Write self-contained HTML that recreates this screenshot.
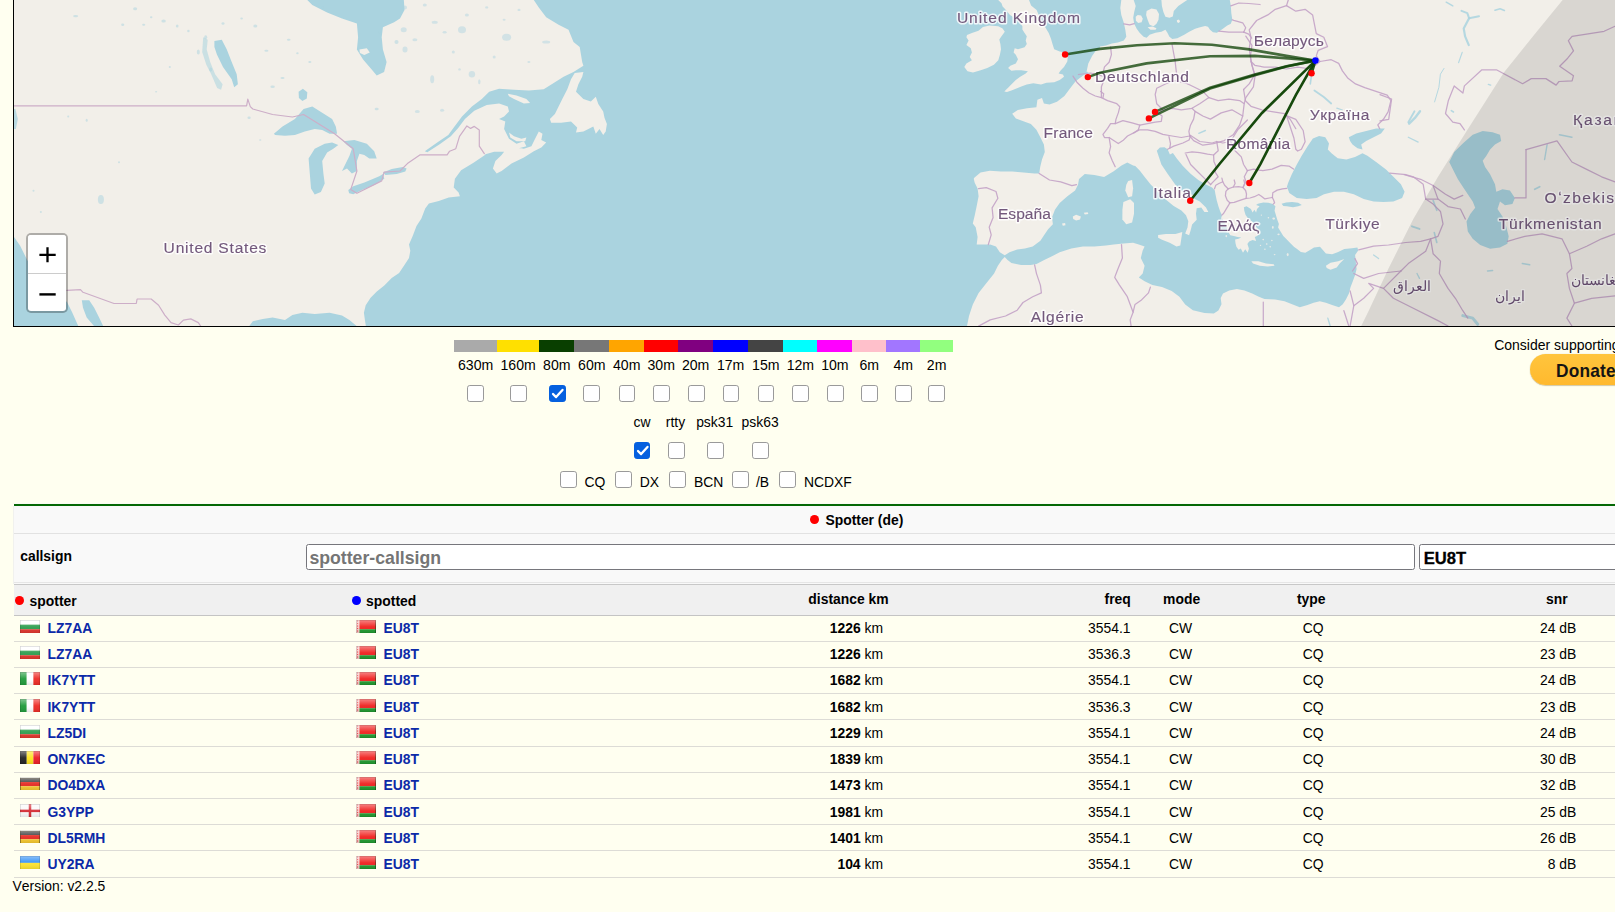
<!DOCTYPE html>
<html>
<head>
<meta charset="utf-8">
<title>RBN map</title>
<style>
*{box-sizing:border-box;}
html,body{margin:0;padding:0;overflow:hidden;}
body{width:1615px;height:912px;overflow:hidden;background:#fffff0;font-family:"Liberation Sans",sans-serif;font-size:13.75px;color:#000;position:relative;font-kerning:none;}
.abs{position:absolute;}
#map{position:absolute;left:13px;top:0;width:1602px;height:327px;border-left:1px solid #000;border-bottom:1px solid #000;overflow:hidden;background:#aad3df;}
#map svg{position:absolute;left:-14px;top:0;}
.zoomctl{position:absolute;left:26.4px;top:233px;width:41.6px;height:79.6px;border:2px solid rgba(0,0,0,0.28);border-radius:5px;background:#fff;background-clip:padding-box;}
.zoomctl .b{position:absolute;left:0;width:37.6px;height:37px;background:#fff;text-align:center;font-weight:bold;font-size:26px;line-height:37px;color:#000;}
.bandbar div{position:absolute;top:340px;height:12px;}
.bl{position:absolute;top:357px;font-size:14.5px;line-height:17px;text-align:center;white-space:nowrap;}
.cb{position:absolute;width:16.8px;height:16.8px;border:1.1px solid #9a9a9a;border-radius:2.8px;background:#fff;}
.cb.on{background:#0560df;border-color:#0560df;}
.t{position:absolute;white-space:nowrap;line-height:16px;}
.b{font-weight:bold;}
.hl{position:absolute;left:14px;width:1601px;height:1px;}
a.cs{color:#0c2aa8;font-weight:bold;text-decoration:none;}
</style>
</head>
<body>

<div id="map">
<svg width="1615" height="327" viewBox="0 0 1615 327">
<defs><filter id="tb" x="-2%" y="-5%" width="104%" height="110%"><feGaussianBlur stdDeviation="0.45"/></filter></defs>
<g filter="url(#tb)">
<rect x="-10" y="-10" width="1640" height="350" fill="#aad3df"/>
<path d="M10.0 -5.0 L533.8 -5.0 L533.8 0.0 L538.8 7.4 L546.2 17.3 L558.6 24.8 L568.5 29.7 L573.5 42.1 L579.7 47.1 L582.2 62.0 L583.4 65.7 L573.5 71.9 L563.6 76.8 L553.7 83.0 L543.7 89.2 L528.9 90.5 L514.0 89.7 L499.1 88.7 L489.2 91.7 L481.8 99.1 L471.9 106.6 L462.0 116.5 L454.5 126.4 L448.3 135.1 L437.2 142.5 L424.8 151.2 L427.3 152.2 L439.7 144.2 L450.8 136.3 L458.2 128.1 L464.9 119.0 L474.3 110.8 L486.7 105.1 L499.1 103.6 L507.8 106.6 L509.0 111.5 L504.1 116.5 L499.1 119.0 L505.3 121.4 L504.1 128.9 L509.0 138.8 L516.5 143.7 L523.9 141.3 L526.4 146.2 L519.0 148.2 L512.8 146.7 L523.9 148.7 L531.4 146.2 L535.1 138.8 L538.8 131.4 L542.5 133.8 L541.3 140.0 L546.2 142.5 L541.3 147.5 L533.8 151.2 L523.9 157.4 L511.5 163.6 L501.6 171.0 L496.7 173.5 L492.9 168.5 L495.4 161.1 L501.6 154.9 L504.1 151.7 L494.2 151.7 L485.5 154.2 L484.6 155.3 L473.5 162.7 L461.1 170.2 L454.9 178.8 L453.7 187.5 L458.6 192.5 L459.9 196.2 L448.7 197.4 L438.8 201.1 L428.9 203.6 L425.2 208.6 L421.4 218.5 L416.5 225.9 L412.8 235.8 L409.0 244.5 L410.3 250.7 L409.0 258.1 L404.1 265.6 L399.1 273.0 L391.7 278.0 L384.3 285.4 L376.8 291.6 L370.6 297.8 L365.7 305.2 L363.9 312.7 L364.9 320.1 L366.9 332.5 L356.9 332.5 L356.9 326.3 L349.4 320.1 L342.0 315.6 L329.6 312.7 L314.7 313.9 L302.4 312.7 L292.4 315.1 L285.0 320.1 L272.6 317.6 L262.7 318.9 L252.8 321.3 L247.8 328.0 L247.8 332.5 L10.0 332.0Z" fill="#f2efe9" />
<path d="M1121.3 -4.0 L1121.3 0.0 L1120.3 7.9 L1121.3 14.9 L1123.8 22.8 L1125.3 29.7 L1126.3 36.7 L1123.8 40.6 L1117.8 42.6 L1111.9 43.6 L1105.9 45.6 L1100.0 46.6 L1099.5 48.9 L1095.4 51.3 L1092.1 55.9 L1088.3 63.4 L1086.5 71.8 L1088.7 71.9 L1083.1 75.6 L1075.6 81.2 L1070.0 88.6 L1064.4 96.1 L1057.0 101.7 L1049.5 104.5 L1043.9 103.6 L1042.0 98.0 L1037.4 99.8 L1036.4 107.3 L1027.1 108.2 L1017.8 110.1 L1012.2 113.8 L1015.9 118.5 L1023.4 121.3 L1030.9 124.1 L1036.4 129.7 L1040.2 137.1 L1043.9 144.6 L1044.8 152.0 L1042.0 159.5 L1040.2 167.0 L1039.2 173.5 L1034.6 173.5 L1023.4 172.6 L1012.2 171.6 L1001.0 171.6 L989.8 170.7 L980.5 172.6 L974.0 178.1 L973.8 179.0 L974.7 182.8 L977.6 188.6 L978.6 196.3 L976.7 206.0 L974.7 215.6 L972.8 223.4 L975.7 227.2 L977.6 236.9 L976.7 244.6 L982.5 244.6 L990.2 244.6 L996.0 246.5 L999.8 252.3 L1004.7 255.2 L1009.5 252.3 L1017.2 249.4 L1024.9 248.5 L1032.7 246.5 L1040.4 240.7 L1044.2 234.9 L1048.1 229.2 L1052.9 224.3 L1052.0 217.6 L1054.9 209.8 L1059.7 203.1 L1067.4 196.3 L1075.1 190.5 L1078.0 184.7 L1079.0 179.0 L1084.8 174.1 L1094.4 175.1 L1104.1 177.0 L1113.7 171.2 L1121.5 165.4 L1127.3 162.5 L1133.1 165.4 L1135.3 166.1 L1139.9 170.7 L1144.5 176.8 L1150.7 184.5 L1158.3 192.2 L1166.0 199.8 L1173.7 206.0 L1181.4 210.6 L1186.0 215.2 L1188.3 221.3 L1187.5 227.5 L1185.2 233.6 L1189.1 235.2 L1190.6 230.6 L1192.1 224.4 L1196.7 219.8 L1196.0 213.7 L1196.7 208.3 L1201.3 207.5 L1204.4 212.1 L1208.3 212.1 L1206.0 207.5 L1199.8 201.4 L1192.1 197.5 L1194.0 195.2 L1190.6 194.2 L1182.9 192.2 L1175.2 184.5 L1167.6 173.7 L1161.4 164.5 L1156.8 150.7 L1159.9 147.6 L1164.5 147.3 L1167.6 149.2 L1169.9 154.5 L1172.9 153.0 L1176.8 158.4 L1182.9 166.1 L1190.6 173.7 L1198.3 179.9 L1206.0 184.5 L1212.1 187.6 L1216.7 192.2 L1214.5 188.8 L1215.4 194.0 L1216.7 200.2 L1218.4 206.3 L1220.2 211.6 L1221.9 215.1 L1221.5 217.7 L1224.1 221.2 L1226.3 226.5 L1228.1 231.8 L1230.3 235.3 L1233.8 236.1 L1237.7 237.0 L1241.2 237.5 L1238.6 238.8 L1235.1 239.6 L1235.5 243.2 L1236.4 246.7 L1238.6 249.7 L1240.8 248.4 L1243.0 252.8 L1245.2 249.3 L1247.8 252.8 L1248.9 248.4 L1247.4 244.0 L1249.1 241.4 L1252.6 240.1 L1256.1 241.0 L1254.8 237.0 L1257.0 236.1 L1260.5 233.5 L1257.9 229.1 L1254.4 224.7 L1251.8 221.2 L1248.2 218.6 L1245.6 215.1 L1244.3 210.7 L1243.9 207.2 L1246.5 206.3 L1250.9 208.9 L1252.6 212.5 L1254.4 209.8 L1256.1 212.5 L1257.0 208.9 L1259.6 206.3 L1256.1 205.0 L1257.9 203.7 L1263.2 202.4 L1268.4 202.8 L1272.8 204.1 L1275.4 206.3 L1274.6 210.7 L1275.9 215.1 L1277.2 219.5 L1278.9 223.9 L1278.1 227.4 L1280.7 231.8 L1283.3 236.1 L1286.8 239.6 L1290.4 243.2 L1293.9 246.7 L1297.4 249.3 L1300.9 251.9 L1305.3 252.8 L1309.6 250.2 L1314.0 247.5 L1320.0 246.7 L1325.9 253.6 L1332.1 254.3 L1338.2 252.0 L1344.3 249.0 L1352.0 248.2 L1357.4 247.4 L1358.2 250.5 L1355.1 255.1 L1355.9 262.8 L1356.6 268.9 L1355.1 275.1 L1352.8 281.2 L1350.5 287.3 L1348.9 293.5 L1345.9 299.6 L1342.8 304.2 L1339.0 307.3 L1332.1 305.0 L1325.9 302.7 L1319.8 301.2 L1313.6 302.7 L1307.5 305.0 L1299.8 307.3 L1292.1 304.2 L1284.5 301.2 L1275.2 299.6 L1264.5 298.9 L1258.3 296.6 L1252.2 293.5 L1244.5 290.4 L1236.9 288.9 L1229.2 290.4 L1223.0 293.5 L1220.7 298.1 L1221.5 304.2 L1218.4 310.4 L1213.8 313.4 L1204.5 313.1 L1192.9 310.2 L1185.2 304.4 L1179.4 296.7 L1171.7 290.9 L1162.0 287.1 L1152.4 285.1 L1144.6 281.3 L1138.8 277.4 L1142.7 273.6 L1144.6 265.8 L1140.8 258.1 L1142.7 250.4 L1144.6 246.5 L1138.8 244.6 L1133.1 242.7 L1123.4 243.6 L1113.7 244.6 L1106.0 245.6 L1094.4 246.5 L1082.9 246.5 L1071.3 248.5 L1059.7 252.3 L1052.0 256.2 L1044.2 260.0 L1036.5 263.9 L1030.7 264.9 L1021.1 264.9 L1011.4 262.9 L1007.6 260.0 L1004.7 257.1 L1001.8 260.0 L997.9 265.8 L994.1 273.6 L986.3 283.2 L978.6 292.9 L972.8 304.4 L969.0 316.0 L967.0 326.1 L967.0 331.5 L1625.0 332.0 L1625.0 -5.0 L1229.8 -4.0 L1229.8 0.0 L1230.8 5.9 L1231.3 12.9 L1232.3 19.8 L1230.8 23.8 L1226.9 25.8 L1222.9 28.7 L1219.9 30.7 L1216.9 32.7 L1213.0 32.2 L1210.0 29.7 L1208.0 26.8 L1205.1 26.0 L1200.1 27.3 L1195.1 28.7 L1189.2 31.7 L1184.2 34.7 L1177.3 38.2 L1172.3 39.1 L1169.4 36.7 L1167.4 32.7 L1165.4 29.7 L1161.4 31.7 L1155.5 32.7 L1149.6 34.7 L1146.6 37.7 L1143.6 36.7 L1139.6 32.7 L1136.7 28.7 L1134.2 23.8 L1133.2 17.8 L1134.2 11.9 L1135.7 5.9 L1133.7 0.0 L1133.7 -4.0Z" fill="#f2efe9" />
<path d="M583.4 71.9 L582.2 76.8 L578.4 84.3 L576.0 91.7 L583.4 99.1 L590.8 101.6 L595.8 96.7 L598.3 104.1 L603.2 111.5 L604.5 117.7 L606.9 123.9 L605.7 131.4 L603.2 135.1 L599.5 128.9 L595.8 133.8 L593.3 126.4 L588.4 128.9 L583.4 131.4 L576.0 132.6 L577.2 127.6 L571.0 121.4 L561.1 122.7 L551.2 122.7 L549.9 119.0 L554.9 114.0 L558.6 106.6 L562.3 99.1 L567.3 89.2 L571.0 79.3 L574.7 73.1Z" fill="#f2efe9" />
<path d="M507.8 93.7 L516.5 95.4 L526.4 99.1 L530.1 102.9 L523.9 103.6 L514.0 99.1 L509.0 96.2Z" fill="#f2efe9" />
<path d="M509.0 132.6 L514.0 136.3 L521.4 138.8 L526.4 137.5 L525.2 141.3 L516.5 141.3 L510.3 137.5Z" fill="#f2efe9" />
<path d="M982.9 26.9 L989.5 25.4 L998.3 26.3 L1002.6 28.5 L1004.8 31.8 L1001.5 36.2 L999.3 39.5 L1000.4 43.9 L1001.0 49.3 L999.9 54.8 L998.3 60.3 L993.9 64.7 L987.3 68.0 L980.7 70.2 L973.0 72.4 L967.5 71.3 L964.3 66.9 L966.4 63.6 L971.9 60.3 L969.7 57.0 L971.9 52.6 L970.8 48.3 L966.4 45.0 L968.6 40.6 L966.4 37.3 L967.0 35.1 L971.9 32.9 L978.5 30.7Z" fill="#f2efe9" />
<path d="M998.2 -5.0 L998.2 0.0 L1001.5 3.3 L1002.6 6.6 L1004.8 8.8 L1010.0 15.0 L1018.0 20.0 L1022.4 26.3 L1022.4 29.6 L1024.6 32.9 L1026.8 36.2 L1025.7 40.6 L1026.8 43.9 L1024.6 47.2 L1018.0 49.3 L1014.7 48.2 L1013.6 52.6 L1015.8 54.8 L1018.0 59.2 L1015.8 63.6 L1010.3 65.8 L1008.1 68.0 L1011.4 70.7 L1015.8 70.2 L1021.3 70.2 L1027.9 71.3 L1025.7 73.5 L1020.2 76.8 L1015.8 80.0 L1012.5 83.3 L1008.1 87.7 L1004.3 91.6 L1007.0 92.1 L1011.4 90.5 L1015.8 88.8 L1021.3 86.6 L1026.8 84.4 L1033.3 83.3 L1041.0 84.4 L1046.5 82.8 L1054.2 82.2 L1059.7 80.0 L1064.0 76.8 L1063.0 74.6 L1058.6 73.5 L1060.8 70.2 L1064.0 66.9 L1067.3 61.4 L1067.9 55.9 L1065.1 52.6 L1059.7 51.5 L1054.2 49.3 L1052.5 43.9 L1050.9 38.4 L1048.7 32.9 L1045.4 27.4 L1040.0 18.0 L1036.6 9.9 L1031.1 5.5 L1029.0 0.0 L1029.0 -5.0Z" fill="#f2efe9" />
<path d="M1128.2 180.9 L1132.1 179.9 L1133.1 188.6 L1132.1 196.3 L1128.2 197.3 L1125.3 190.5 L1126.3 184.7Z" fill="#f2efe9" />
<path d="M1123.4 202.1 L1130.2 199.2 L1134.0 203.1 L1134.0 213.7 L1132.1 222.4 L1126.3 224.3 L1122.4 219.5 L1122.4 209.8Z" fill="#f2efe9" />
<path d="M1158.1 234.9 L1165.9 234.0 L1175.5 234.0 L1182.3 232.0 L1181.3 238.8 L1180.3 245.6 L1176.5 246.5 L1169.7 242.7 L1162.0 239.8 L1158.1 237.8Z" fill="#f2efe9" />
<path d="M1072.8 216.6 L1076.1 214.7 L1080.9 216.6 L1080.0 219.5 L1076.1 220.5 L1073.2 219.1Z" fill="#f2efe9" />
<path d="M1083.8 212.7 L1087.7 212.2 L1088.3 214.1 L1084.8 214.5Z" fill="#f2efe9" />
<path d="M1062.0 223.4 L1065.1 223.0 L1065.5 225.3 L1062.8 225.7Z" fill="#f2efe9" />
<path d="M1251.4 261.2 L1258.3 261.2 L1266.0 263.5 L1273.7 264.3 L1274.5 265.8 L1267.6 266.6 L1259.9 265.8 L1253.0 263.5Z" fill="#f2efe9" />
<path d="M1325.9 265.8 L1330.5 262.8 L1338.2 261.2 L1344.3 258.9 L1339.7 263.5 L1336.7 267.4 L1330.5 269.7 L1326.7 268.1Z" fill="#f2efe9" />
<path d="M1161.4 -4.0 L1161.4 0.0 L1161.9 5.9 L1163.4 11.9 L1165.4 16.8 L1169.4 17.8 L1172.8 16.4 L1173.8 10.9 L1178.3 5.9 L1184.2 2.0 L1187.2 0.0 L1187.2 -4.0Z" fill="#f2efe9" />
<path d="M1146.6 10.9 L1151.5 8.4 L1156.5 9.4 L1159.0 13.9 L1158.5 19.8 L1156.5 23.8 L1153.5 26.3 L1149.6 24.8 L1147.6 19.8 L1146.1 14.9Z" fill="#f2efe9" />
<path d="M1135.7 16.8 L1137.7 14.9 L1141.1 15.4 L1142.8 18.8 L1141.6 22.3 L1138.2 23.0 L1135.9 20.8Z" fill="#f2efe9" />
<path d="M1147.6 27.3 L1152.5 26.6 L1156.5 28.2 L1155.5 29.7 L1150.5 29.7Z" fill="#f2efe9" />
<path d="M1176.8 20.3 L1178.8 19.6 L1180.1 21.3 L1178.8 23.0 L1177.1 22.3Z" fill="#f2efe9" />
<ellipse cx="1273.7" cy="218.6" rx="1.4" ry="1.1" fill="#f2efe9" opacity="0.85"/>
<ellipse cx="1272.8" cy="227.4" rx="0.9" ry="1.3" fill="#f2efe9" opacity="0.85"/>
<ellipse cx="1278.5" cy="234.4" rx="1.2" ry="0.8" fill="#f2efe9" opacity="0.85"/>
<ellipse cx="1287.7" cy="254.6" rx="1.0" ry="1.6" fill="#f2efe9" opacity="0.85"/>
<ellipse cx="1263.2" cy="239.6" rx="0.8" ry="0.8" fill="#f2efe9" opacity="0.85"/>
<ellipse cx="1266.7" cy="244.0" rx="0.9" ry="0.7" fill="#f2efe9" opacity="0.85"/>
<ellipse cx="1264.9" cy="249.3" rx="0.8" ry="0.8" fill="#f2efe9" opacity="0.85"/>
<ellipse cx="1270.2" cy="246.7" rx="0.8" ry="0.8" fill="#f2efe9" opacity="0.85"/>
<ellipse cx="1260.5" cy="245.4" rx="0.7" ry="0.7" fill="#f2efe9" opacity="0.85"/>
<ellipse cx="1271.9" cy="240.5" rx="0.7" ry="0.7" fill="#f2efe9" opacity="0.85"/>
<ellipse cx="1268.4" cy="217.7" rx="0.8" ry="0.8" fill="#f2efe9" opacity="0.85"/>
<ellipse cx="1261.4" cy="215.1" rx="0.7" ry="0.7" fill="#f2efe9" opacity="0.85"/>
<ellipse cx="1274.6" cy="254.6" rx="0.9" ry="0.6" fill="#f2efe9" opacity="0.85"/>
<ellipse cx="1257.5" cy="232.6" rx="1.0" ry="2.4" fill="#f2efe9" opacity="0.85"/>
<ellipse cx="1221.9" cy="218.6" rx="0.7" ry="1.5" fill="#f2efe9" opacity="0.85"/>
<ellipse cx="1226.3" cy="236.1" rx="0.8" ry="1.2" fill="#f2efe9" opacity="0.85"/>
<path d="M307.3 -5.0 L307.3 0.0 L312.3 5.0 L327.1 12.4 L342.0 18.6 L356.9 23.5 L358.1 37.2 L356.9 49.6 L363.1 59.5 L371.7 69.4 L376.7 75.6 L384.1 71.9 L386.6 62.0 L382.9 49.6 L381.7 37.2 L382.9 27.3 L394.1 22.3 L400.0 18.6 L404.5 9.9 L403.5 -5.0Z" fill="#aad3df" />
<path d="M359.4 49.6 L366.8 48.3 L369.8 52.5 L364.3 55.0 L359.9 53.0Z" fill="#f2efe9" />
<path d="M273.9 133.8 L282.5 126.4 L294.9 119.0 L303.6 109.0 L312.3 106.6 L322.2 112.8 L332.1 119.0 L335.8 126.4 L337.1 133.8 L329.6 133.8 L322.2 130.1 L314.7 128.9 L304.8 131.4 L294.9 135.1 L285.0 135.8 L275.1 135.1Z" fill="#aad3df" />
<path d="M308.6 158.6 L314.7 148.7 L324.7 143.7 L332.1 142.5 L338.3 145.0 L333.3 148.7 L327.1 152.4 L322.2 161.1 L323.4 173.5 L324.7 183.4 L320.9 192.1 L314.7 194.5 L311.0 188.4 L309.8 173.5Z" fill="#aad3df" />
<path d="M343.2 141.3 L354.4 140.0 L366.8 143.7 L374.2 151.2 L376.7 158.6 L369.3 158.6 L364.3 154.9 L359.4 153.7 L356.9 161.1 L356.9 171.0 L351.9 173.5 L347.0 168.5 L342.0 171.0 L345.7 163.6 L349.4 156.1 L351.9 148.7 L347.0 145.0Z" fill="#aad3df" />
<path d="M348.3 190.0 L353.3 186.3 L364.4 182.5 L379.3 176.3 L383.0 173.9 L384.3 178.8 L374.3 185.0 L362.0 190.0 L353.3 194.2 L349.1 193.2Z" fill="#aad3df" />
<path d="M383.0 172.6 L391.7 168.9 L402.9 166.9 L406.6 168.4 L405.3 171.4 L396.7 173.9 L385.5 175.1Z" fill="#aad3df" />
<path d="M298.6 91.7 L302.9 88.7 L307.3 92.2 L306.8 98.6 L302.4 101.1 L298.9 97.9Z" fill="#aad3df" />
<path d="M214.4 40.9 L221.8 39.7 L226.8 49.6 L231.7 62.0 L236.7 74.3 L237.9 84.3 L234.2 87.2 L231.7 79.3 L223.0 66.9 L216.9 54.5 L214.4 47.1Z" fill="#aad3df" />
<path d="M203.2 37.2 L207.7 39.7 L206.7 49.6 L210.2 62.0 L215.1 74.3 L222.6 84.3 L221.1 89.7 L217.1 88.0 L211.2 74.3 L206.2 64.4 L202.2 52.0Z" fill="#aad3df" opacity="0.55"/>
<ellipse cx="75.6" cy="16.1" rx="2.5" ry="1.2" fill="#aad3df" opacity="0.5"/><ellipse cx="135.1" cy="8.7" rx="2" ry="1.5" fill="#aad3df" opacity="0.5"/><ellipse cx="163.6" cy="21.1" rx="2.2" ry="1.5" fill="#aad3df" opacity="0.5"/><ellipse cx="143.7" cy="24.8" rx="1.5" ry="1" fill="#aad3df" opacity="0.5"/><ellipse cx="122.7" cy="24.8" rx="1.5" ry="1.2" fill="#aad3df" opacity="0.5"/><ellipse cx="177.2" cy="26.0" rx="1.3" ry="1.5" fill="#aad3df" opacity="0.5"/><ellipse cx="205.7" cy="37.2" rx="1.5" ry="2" fill="#aad3df" opacity="0.5"/><ellipse cx="255.3" cy="26.0" rx="2" ry="1.5" fill="#aad3df" opacity="0.5"/><ellipse cx="241.6" cy="18.6" rx="1.3" ry="1" fill="#aad3df" opacity="0.5"/><ellipse cx="288.7" cy="39.7" rx="1.8" ry="1" fill="#aad3df" opacity="0.5"/><ellipse cx="266.4" cy="50.8" rx="2" ry="1" fill="#aad3df" opacity="0.5"/><ellipse cx="272.6" cy="86.7" rx="2.2" ry="1.3" fill="#aad3df" opacity="0.5"/><ellipse cx="260.2" cy="140.0" rx="1.1" ry="0.8" fill="#aad3df" opacity="0.5"/><ellipse cx="249.1" cy="117.7" rx="1.6" ry="1.2" fill="#aad3df" opacity="0.5"/><ellipse cx="100.9" cy="199.5" rx="3" ry="4.5" fill="#aad3df" opacity="0.5"/><ellipse cx="86.7" cy="120.2" rx="1" ry="1.5" fill="#aad3df" opacity="0.5"/><ellipse cx="68.2" cy="116.5" rx="1" ry="1" fill="#aad3df" opacity="0.5"/><ellipse cx="156.1" cy="91.7" rx="1" ry="0.8" fill="#aad3df" opacity="0.5"/><ellipse cx="169.8" cy="66.9" rx="1" ry="1" fill="#aad3df" opacity="0.5"/><ellipse cx="119.0" cy="162.3" rx="1" ry="1" fill="#aad3df" opacity="0.5"/><ellipse cx="33.5" cy="190.8" rx="1" ry="1" fill="#aad3df" opacity="0.5"/><ellipse cx="40.9" cy="211.9" rx="1" ry="1" fill="#aad3df" opacity="0.5"/><ellipse cx="198.3" cy="52.0" rx="1.5" ry="2.5" fill="#aad3df" opacity="0.5"/><ellipse cx="210.7" cy="69.4" rx="1.5" ry="2" fill="#aad3df" opacity="0.5"/><ellipse cx="376.7" cy="109.0" rx="2" ry="1.2" fill="#aad3df" opacity="0.5"/><ellipse cx="379.2" cy="32.2" rx="1" ry="1" fill="#aad3df" opacity="0.5"/><ellipse cx="396.5" cy="42.1" rx="2" ry="2" fill="#aad3df" opacity="0.5"/><ellipse cx="309.8" cy="62.0" rx="1.5" ry="1" fill="#aad3df" opacity="0.5"/><ellipse cx="297.4" cy="53.3" rx="1.2" ry="1" fill="#aad3df" opacity="0.5"/><ellipse cx="282.5" cy="78.1" rx="2" ry="1" fill="#aad3df" opacity="0.5"/><ellipse cx="322.2" cy="7.4" rx="1" ry="1" fill="#aad3df" opacity="0.5"/><ellipse cx="223.0" cy="23.5" rx="1.5" ry="1.2" fill="#aad3df" opacity="0.5"/><ellipse cx="188.4" cy="31.0" rx="1.2" ry="1.2" fill="#aad3df" opacity="0.5"/><ellipse cx="151.2" cy="17.3" rx="1.2" ry="1" fill="#aad3df" opacity="0.5"/>
<ellipse cx="405.0" cy="7.4" rx="2" ry="2" fill="#aad3df" opacity="0.45"/><ellipse cx="403.7" cy="29.7" rx="3" ry="2.5" fill="#aad3df" opacity="0.45"/><ellipse cx="414.9" cy="39.7" rx="2.5" ry="1.5" fill="#aad3df" opacity="0.45"/><ellipse cx="434.7" cy="22.3" rx="3" ry="1.5" fill="#aad3df" opacity="0.45"/><ellipse cx="462.0" cy="29.7" rx="4" ry="3.5" fill="#aad3df" opacity="0.45"/><ellipse cx="466.9" cy="14.9" rx="2" ry="1.5" fill="#aad3df" opacity="0.45"/><ellipse cx="444.6" cy="32.2" rx="2" ry="1.2" fill="#aad3df" opacity="0.45"/><ellipse cx="506.6" cy="37.2" rx="4.5" ry="3.5" fill="#aad3df" opacity="0.45"/><ellipse cx="546.2" cy="42.1" rx="4" ry="1.5" fill="#aad3df" opacity="0.45"/><ellipse cx="504.1" cy="19.8" rx="1.5" ry="1" fill="#aad3df" opacity="0.45"/><ellipse cx="405.0" cy="49.6" rx="2.5" ry="3" fill="#aad3df" opacity="0.45"/><ellipse cx="432.2" cy="79.3" rx="2" ry="4" fill="#aad3df" opacity="0.45"/><ellipse cx="471.9" cy="74.3" rx="3.2" ry="3.2" fill="#aad3df" opacity="0.45"/><ellipse cx="453.3" cy="52.0" rx="1.5" ry="1.5" fill="#aad3df" opacity="0.45"/><ellipse cx="494.2" cy="57.0" rx="1.5" ry="1.5" fill="#aad3df" opacity="0.45"/><ellipse cx="479.3" cy="81.8" rx="1.2" ry="2.5" fill="#aad3df" opacity="0.45"/><ellipse cx="442.1" cy="110.3" rx="2" ry="1.5" fill="#aad3df" opacity="0.45"/><ellipse cx="417.3" cy="111.5" rx="2.5" ry="1.5" fill="#aad3df" opacity="0.45"/><ellipse cx="459.5" cy="69.4" rx="1.2" ry="1.2" fill="#aad3df" opacity="0.45"/><ellipse cx="424.8" cy="5.0" rx="2" ry="1.5" fill="#aad3df" opacity="0.45"/><ellipse cx="486.7" cy="7.4" rx="1.5" ry="1.2" fill="#aad3df" opacity="0.45"/><ellipse cx="519.0" cy="9.9" rx="1.5" ry="1.2" fill="#aad3df" opacity="0.45"/><ellipse cx="528.9" cy="62.0" rx="1.5" ry="1" fill="#aad3df" opacity="0.45"/>
<path d="M9.9 109.0 L15.4 109.0 L17.8 119.0 L15.9 128.9 L9.9 128.9Z" fill="#aad3df" opacity="0.8"/>
<path d="M10.0 232.0 L14.0 237.0 L20.0 245.6 L27.2 260.0 L36.0 274.0 L45.0 285.0 L60.0 296.0 L67.0 302.0 L72.0 312.0 L76.0 321.0 L81.0 332.0 L10.0 332.0Z" fill="#aad3df" />
<path d="M81.8 300.3 L89.2 300.3 L94.2 307.7 L99.1 317.6 L104.1 328.0 L105.3 335.0 L95.4 335.0 L94.2 326.3 L86.7 317.6 L83.0 307.7Z" fill="#aad3df" />
<path d="M1288.1 183.0 L1291.8 174.3 L1296.8 164.4 L1301.7 155.8 L1307.9 145.8 L1312.9 138.4 L1319.1 135.9 L1325.3 137.2 L1329.0 143.4 L1327.8 149.6 L1331.5 153.3 L1337.7 158.2 L1346.4 159.5 L1355.0 157.0 L1362.5 153.3 L1367.4 155.8 L1376.1 162.0 L1386.0 169.4 L1393.4 176.8 L1400.9 184.3 L1404.6 191.7 L1402.1 197.9 L1393.4 201.6 L1383.5 202.1 L1373.6 201.6 L1363.7 199.1 L1353.8 194.2 L1343.9 191.7 L1334.0 191.7 L1324.0 194.2 L1316.6 197.9 L1306.7 199.1 L1296.8 197.9 L1289.3 192.9 L1286.9 186.7Z" fill="#aad3df" />
<path d="M1348.8 137.2 L1356.3 133.5 L1366.2 131.0 L1376.1 128.5 L1384.8 128.5 L1381.0 133.5 L1373.6 137.2 L1366.2 140.9 L1361.2 144.6 L1362.5 149.6 L1357.5 148.3 L1352.5 144.6 L1350.1 140.9Z" fill="#aad3df" />
<path d="M1449.2 162.0 L1454.2 152.0 L1462.8 143.4 L1472.7 134.7 L1482.7 131.0 L1492.6 132.2 L1500.0 134.7 L1501.2 140.9 L1495.0 144.6 L1490.1 149.6 L1486.4 155.8 L1482.7 160.7 L1485.1 166.9 L1490.1 174.3 L1495.0 184.3 L1496.3 191.7 L1502.5 189.2 L1509.9 190.5 L1514.9 197.9 L1512.4 204.1 L1505.0 205.3 L1500.0 201.6 L1497.5 209.0 L1502.5 216.5 L1506.2 226.4 L1508.7 236.3 L1507.4 243.7 L1500.0 247.5 L1490.1 248.7 L1480.2 245.0 L1472.7 238.8 L1467.8 231.4 L1466.5 221.4 L1470.3 214.0 L1475.2 207.8 L1472.7 201.6 L1467.8 194.2 L1462.8 186.7 L1457.9 179.3 L1454.2 171.9Z" fill="#aad3df" />
<path d="M1281.6 203.7 L1286.0 202.4 L1292.1 201.9 L1298.2 202.8 L1301.8 205.0 L1298.2 206.3 L1293.0 207.2 L1286.8 206.3 L1283.3 205.9Z" fill="#aad3df" />
<path d="M1446.2 2.2 L1452.8 5.8" fill="none" stroke="#aad3df" stroke-width="1.5" stroke-linejoin="round" stroke-linecap="round" stroke-opacity="0.85"/>
<path d="M1461.5 10.9 L1467.3 13.1 L1469.1 18.2 L1479.0 16.3" fill="none" stroke="#aad3df" stroke-width="2.0" stroke-linejoin="round" stroke-linecap="round" stroke-opacity="0.85"/>
<path d="M1469.1 18.2 L1463.7 28.4 L1465.1 36.4 L1468.8 45.1" fill="none" stroke="#aad3df" stroke-width="2.2" stroke-linejoin="round" stroke-linecap="round" stroke-opacity="0.85"/>
<path d="M1462.2 52.4 L1458.6 62.6" fill="none" stroke="#aad3df" stroke-width="1.2" stroke-linejoin="round" stroke-linecap="round" stroke-opacity="0.85"/>
<path d="M1444.0 68.4 L1440.4 74.2 L1438.9 87.3 L1434.6 101.9" fill="none" stroke="#aad3df" stroke-width="1.0" stroke-linejoin="round" stroke-linecap="round" stroke-opacity="0.85"/>
<path d="M1420.0 111.3 L1414.9 117.9 L1409.1 123.7" fill="none" stroke="#aad3df" stroke-width="2.4" stroke-linejoin="round" stroke-linecap="round" stroke-opacity="0.85"/>
<path d="M1495.0 10.2 L1500.1 8.7 L1504.4 10.5" fill="none" stroke="#aad3df" stroke-width="1.6" stroke-linejoin="round" stroke-linecap="round" stroke-opacity="0.85"/>
<path d="M1488.4 84.4 L1490.6 85.1" fill="none" stroke="#aad3df" stroke-width="1.5" stroke-linejoin="round" stroke-linecap="round" stroke-opacity="0.85"/>
<path d="M1451.3 110.6 L1453.5 112.0" fill="none" stroke="#aad3df" stroke-width="1.5" stroke-linejoin="round" stroke-linecap="round" stroke-opacity="0.85"/>
<path d="M1311.6 74.6 L1310.3 83.9" fill="none" stroke="#aad3df" stroke-width="1.6" stroke-linejoin="round" stroke-linecap="round" stroke-opacity="0.85"/>
<path d="M1314.4 90.4 L1323.8 97.0 L1331.2 103.5" fill="none" stroke="#aad3df" stroke-width="1.8" stroke-linejoin="round" stroke-linecap="round" stroke-opacity="0.85"/>
<path d="M1336.8 108.1 L1342.4 110.0" fill="none" stroke="#aad3df" stroke-width="1.2" stroke-linejoin="round" stroke-linecap="round" stroke-opacity="0.85"/>
<path d="M1198.8 133.3 L1205.4 130.5" fill="none" stroke="#aad3df" stroke-width="1.4" stroke-linejoin="round" stroke-linecap="round" stroke-opacity="0.85"/>
<path d="M1414.5 111.2 L1408.3 122.3" fill="none" stroke="#aad3df" stroke-width="1.8" stroke-linejoin="round" stroke-linecap="round" stroke-opacity="0.85"/>
<path d="M1408.3 137.2 L1418.2 142.1" fill="none" stroke="#aad3df" stroke-width="1.2" stroke-linejoin="round" stroke-linecap="round" stroke-opacity="0.85"/>
<path d="M1559.5 134.7 L1571.9 137.2" fill="none" stroke="#aad3df" stroke-width="1.6" stroke-linejoin="round" stroke-linecap="round" stroke-opacity="0.85"/>
<path d="M1547.1 144.6 L1544.6 159.5" fill="none" stroke="#aad3df" stroke-width="1.4" stroke-linejoin="round" stroke-linecap="round" stroke-opacity="0.85"/>
<path d="M1534.7 189.2 L1539.7 186.7" fill="none" stroke="#aad3df" stroke-width="1.8" stroke-linejoin="round" stroke-linecap="round" stroke-opacity="0.85"/>
<path d="M1433.1 200.4 L1436.8 210.3" fill="none" stroke="#aad3df" stroke-width="1.6" stroke-linejoin="round" stroke-linecap="round" stroke-opacity="0.85"/>
<path d="M1434.3 232.6 L1436.8 242.5" fill="none" stroke="#aad3df" stroke-width="1.6" stroke-linejoin="round" stroke-linecap="round" stroke-opacity="0.85"/>
<path d="M1412.0 226.4 L1419.5 228.9" fill="none" stroke="#aad3df" stroke-width="2.0" stroke-linejoin="round" stroke-linecap="round" stroke-opacity="0.85"/>
<path d="M1373.6 254.9 L1378.6 258.6" fill="none" stroke="#aad3df" stroke-width="1.2" stroke-linejoin="round" stroke-linecap="round" stroke-opacity="0.85"/>
<path d="M1462.8 315.6 L1472.7 318.1 L1477.7 324.3" fill="none" stroke="#aad3df" stroke-width="3.0" stroke-linejoin="round" stroke-linecap="round" stroke-opacity="0.85"/>
<path d="M1522.3 263.6 L1529.7 264.8" fill="none" stroke="#aad3df" stroke-width="1.5" stroke-linejoin="round" stroke-linecap="round" stroke-opacity="0.85"/>
<path d="M1487.6 271.0 L1492.6 270.5" fill="none" stroke="#aad3df" stroke-width="1.5" stroke-linejoin="round" stroke-linecap="round" stroke-opacity="0.85"/>
<path d="M1417.0 273.5 L1419.5 278.4" fill="none" stroke="#aad3df" stroke-width="1.3" stroke-linejoin="round" stroke-linecap="round" stroke-opacity="0.85"/>
<path d="M1327.8 318.1 L1330.2 326.0" fill="none" stroke="#aad3df" stroke-width="1.4" stroke-linejoin="round" stroke-linecap="round" stroke-opacity="0.85"/>
<path d="M1274.5 222.7 L1277.0 233.8" fill="none" stroke="#aad3df" stroke-width="1.0" stroke-linejoin="round" stroke-linecap="round" stroke-opacity="0.85"/>
<path d="M13.6 105.8 L246.6 105.8 L247.8 99.1 L250.3 106.6 L252.8 109.0 L272.6 114.5 L292.4 117.0 L303.6 114.5 L334.6 133.8 L344.5 141.8 L353.2 148.7 L356.9 171.0 L350.7 189.6 L356.9 193.3 L381.7 180.9 L384.1 172.2 L400.0 171.0 L400.0 171.0 L407.4 163.6 L419.8 154.9 L447.1 154.9 L449.6 151.2 L455.8 148.7 L459.5 136.3 L466.9 125.9 L470.6 128.4 L474.3 126.4 L479.3 130.1 L479.3 146.2 L484.3 153.7" fill="none" stroke="#cdaec8" stroke-width="1.2" stroke-linejoin="round" stroke-linecap="round" />
<path d="M66.9 290.4 L80.5 289.6 L83.0 292.3 L114.0 303.5 L136.3 303.5 L137.1 299.0 L151.2 299.0 L158.6 305.2 L164.8 315.1 L171.0 322.6 L178.4 325.0 L183.4 320.1 L190.8 318.9 L198.3 322.6 L202.0 328.0" fill="none" stroke="#cdaec8" stroke-width="1.2" stroke-linejoin="round" stroke-linecap="round" />
<path d="M1073.0 76.1 L1076.9 82.2 L1083.0 88.3 L1089.1 93.0 L1095.3 96.0 L1101.4 97.6 L1107.6 100.6 L1116.8 103.7 L1119.8 106.8 L1118.3 112.9 L1116.0 119.1 L1115.2 123.7" fill="none" stroke="#c3a2c7" stroke-width="1.25" stroke-linejoin="round" stroke-linecap="round" stroke-opacity="0.9"/>
<path d="M1110.6 46.9 L1111.4 54.6 L1109.1 62.2 L1104.5 66.9 L1103.0 73.0 L1103.7 80.7 L1101.4 86.8 L1101.4 97.6" fill="none" stroke="#c3a2c7" stroke-width="1.25" stroke-linejoin="round" stroke-linecap="round" stroke-opacity="0.9"/>
<path d="M1078.4 74.5 L1090.7 73.0 L1103.0 76.1" fill="none" stroke="#c3a2c7" stroke-width="1.25" stroke-linejoin="round" stroke-linecap="round" stroke-opacity="0.9"/>
<path d="M1100.7 91.4 L1103.7 93.7 L1103.0 97.6" fill="none" stroke="#c3a2c7" stroke-width="1.25" stroke-linejoin="round" stroke-linecap="round" stroke-opacity="0.9"/>
<path d="M1115.2 123.7 L1122.9 120.6 L1132.1 122.9 L1139.8 125.2 L1138.3 129.8 L1133.7 132.9 L1127.5 136.0 L1122.9 140.6 L1118.3 143.6 L1113.7 140.6 L1109.1 137.5 L1104.5 137.5 L1103.0 134.4 L1107.6 128.3 L1110.6 123.7 L1115.2 123.7" fill="none" stroke="#c3a2c7" stroke-width="1.25" stroke-linejoin="round" stroke-linecap="round" stroke-opacity="0.9"/>
<path d="M1139.8 125.2 L1147.5 123.7 L1155.2 122.1 L1161.3 121.4 L1162.1 116.0 L1158.2 112.9 L1162.8 109.8" fill="none" stroke="#c3a2c7" stroke-width="1.25" stroke-linejoin="round" stroke-linecap="round" stroke-opacity="0.9"/>
<path d="M1162.8 109.8 L1156.7 103.7 L1155.2 94.5 L1156.7 88.3 L1165.9 83.7 L1175.1 80.7 L1187.4 83.7 L1196.6 88.3 L1202.8 91.4 L1208.9 97.6" fill="none" stroke="#c3a2c7" stroke-width="1.25" stroke-linejoin="round" stroke-linecap="round" stroke-opacity="0.9"/>
<path d="M1162.8 109.8 L1172.1 108.3 L1181.3 109.8 L1192.0 108.3 L1199.7 103.7 L1208.9 97.6" fill="none" stroke="#c3a2c7" stroke-width="1.25" stroke-linejoin="round" stroke-linecap="round" stroke-opacity="0.9"/>
<path d="M1172.1 44.6 L1173.6 53.0 L1175.1 60.7 L1175.9 68.4 L1176.7 74.5 L1187.4 83.7" fill="none" stroke="#c3a2c7" stroke-width="1.25" stroke-linejoin="round" stroke-linecap="round" stroke-opacity="0.9"/>
<path d="M1192.0 108.3 L1195.1 111.4 L1193.6 119.1 L1190.5 125.2 L1188.9 131.3 L1189.7 136.0" fill="none" stroke="#c3a2c7" stroke-width="1.25" stroke-linejoin="round" stroke-linecap="round" stroke-opacity="0.9"/>
<path d="M1189.7 136.0 L1181.3 137.5 L1172.1 136.0 L1162.8 134.4 L1155.2 131.3 L1147.5 129.8 L1139.8 129.8 L1133.7 132.9" fill="none" stroke="#c3a2c7" stroke-width="1.25" stroke-linejoin="round" stroke-linecap="round" stroke-opacity="0.9"/>
<path d="M1109.1 137.5 L1110.6 146.7 L1109.1 152.8 L1112.2 160.5 L1115.2 166.7" fill="none" stroke="#c3a2c7" stroke-width="1.25" stroke-linejoin="round" stroke-linecap="round" stroke-opacity="0.9"/>
<path d="M1169.0 136.7 L1170.5 143.6 L1169.8 148.2" fill="none" stroke="#c3a2c7" stroke-width="1.25" stroke-linejoin="round" stroke-linecap="round" stroke-opacity="0.9"/>
<path d="M1195.1 111.4 L1202.8 116.0 L1210.4 119.1 L1221.2 112.9 L1231.9 109.8 L1242.7 116.0 L1239.6 125.2 L1233.5 134.4 L1224.3 140.6 L1213.5 143.6 L1202.8 145.2 L1193.6 140.6 L1189.7 136.0" fill="none" stroke="#c3a2c7" stroke-width="1.25" stroke-linejoin="round" stroke-linecap="round" stroke-opacity="0.9"/>
<path d="M1208.9 97.6 L1218.1 100.6 L1228.9 99.1 L1239.6 100.6 L1244.2 103.7 L1242.7 116.0" fill="none" stroke="#c3a2c7" stroke-width="1.25" stroke-linejoin="round" stroke-linecap="round" stroke-opacity="0.9"/>
<path d="M1245.8 36.1 L1251.9 45.4 L1250.4 56.1 L1251.9 65.3 L1255.0 76.1 L1253.4 86.8 L1245.8 97.6 L1244.2 103.7" fill="none" stroke="#c3a2c7" stroke-width="1.25" stroke-linejoin="round" stroke-linecap="round" stroke-opacity="0.9"/>
<path d="M1167.6 149.2 L1173.7 146.1 L1182.9 143.0 L1189.1 140.0 L1190.6 135.4" fill="none" stroke="#c3a2c7" stroke-width="1.25" stroke-linejoin="round" stroke-linecap="round" stroke-opacity="0.9"/>
<path d="M1190.6 135.4 L1199.8 141.5 L1212.1 143.0 L1216.7 141.5 L1222.8 143.0 L1230.5 141.5" fill="none" stroke="#c3a2c7" stroke-width="1.25" stroke-linejoin="round" stroke-linecap="round" stroke-opacity="0.9"/>
<path d="M1185.2 153.0 L1192.1 151.9 L1199.8 152.6 L1207.5 154.1 L1213.6 155.0 L1213.9 161.5 L1215.9 166.1 L1215.2 172.2 L1218.2 176.8 L1213.6 181.4 L1210.6 184.5" fill="none" stroke="#c3a2c7" stroke-width="1.25" stroke-linejoin="round" stroke-linecap="round" stroke-opacity="0.9"/>
<path d="M1186.0 154.5 L1190.6 164.5 L1198.3 172.2 L1206.0 179.9 L1210.6 184.5" fill="none" stroke="#c3a2c7" stroke-width="1.25" stroke-linejoin="round" stroke-linecap="round" stroke-opacity="0.9"/>
<path d="M1213.6 155.0 L1218.2 150.7 L1216.7 141.5" fill="none" stroke="#c3a2c7" stroke-width="1.25" stroke-linejoin="round" stroke-linecap="round" stroke-opacity="0.9"/>
<path d="M1230.5 141.5 L1235.1 150.7 L1241.3 156.9 L1243.6 164.5 L1247.4 170.7" fill="none" stroke="#c3a2c7" stroke-width="1.25" stroke-linejoin="round" stroke-linecap="round" stroke-opacity="0.9"/>
<path d="M1247.4 170.7 L1244.3 176.8 L1245.9 181.4 L1243.0 187.4" fill="none" stroke="#c3a2c7" stroke-width="1.25" stroke-linejoin="round" stroke-linecap="round" stroke-opacity="0.9"/>
<path d="M1230.5 141.5 L1238.2 129.2 L1247.4 120.0" fill="none" stroke="#c3a2c7" stroke-width="1.25" stroke-linejoin="round" stroke-linecap="round" stroke-opacity="0.9"/>
<path d="M1247.4 170.7 L1253.6 169.1 L1262.8 170.7 L1272.0 169.1 L1281.2 165.3 L1288.9 166.1 L1293.5 169.1" fill="none" stroke="#c3a2c7" stroke-width="1.25" stroke-linejoin="round" stroke-linecap="round" stroke-opacity="0.9"/>
<path d="M1251.0 61.5 L1249.2 48.5 L1251.0 37.3 L1249.2 29.8 L1256.6 20.5 L1267.8 14.9 L1275.3 9.3 L1286.5 5.6 L1295.8 11.2 L1305.1 9.3 L1312.6 14.9 L1314.4 24.2 L1316.3 33.6 L1323.8 37.3 L1327.5 46.6 L1318.2 50.3 L1316.3 55.9 L1320.0 61.5 L1310.7 69.0 L1297.7 67.1 L1286.5 69.0 L1275.3 67.1 L1264.1 67.1 L1254.8 65.3 L1251.0 61.5" fill="none" stroke="#c3a2c7" stroke-width="1.25" stroke-linejoin="round" stroke-linecap="round" stroke-opacity="0.9"/>
<path d="M1320.0 61.5 L1331.2 59.7 L1338.7 63.4 L1342.4 70.9 L1348.0 78.3 L1355.5 83.9 L1364.8 87.6 L1376.0 91.4 L1387.2 95.1 L1390.9 100.7 L1388.1 111.9 L1383.4 119.3 L1377.8 124.9 L1379.7 128.7" fill="none" stroke="#c3a2c7" stroke-width="1.25" stroke-linejoin="round" stroke-linecap="round" stroke-opacity="0.9"/>
<path d="M1251.0 61.5 L1254.8 74.6 L1249.2 83.9 L1243.6 89.5" fill="none" stroke="#c3a2c7" stroke-width="1.25" stroke-linejoin="round" stroke-linecap="round" stroke-opacity="0.9"/>
<path d="M1243.6 89.5 L1245.4 100.7 L1251.0 106.3 L1262.2 110.0 L1273.4 111.9 L1284.6 113.7 L1290.2 119.3 L1295.8 128.7" fill="none" stroke="#c3a2c7" stroke-width="1.25" stroke-linejoin="round" stroke-linecap="round" stroke-opacity="0.9"/>
<path d="M1286.5 115.6 L1295.8 119.3 L1303.2 130.5 L1305.1 141.7 L1301.4 149.2 L1297.7 151.0 L1295.8 149.2 L1293.9 138.0 L1290.2 126.8 L1286.5 115.6" fill="none" stroke="#c3a2c7" stroke-width="1.25" stroke-linejoin="round" stroke-linecap="round" stroke-opacity="0.9"/>
<path d="M1286.5 5.6 L1288.3 0.0" fill="none" stroke="#c3a2c7" stroke-width="1.25" stroke-linejoin="round" stroke-linecap="round" stroke-opacity="0.9"/>
<path d="M1358.7 249.9 L1373.6 246.2 L1388.5 245.0 L1405.8 242.5 L1420.7 241.3 L1430.6 238.8" fill="none" stroke="#c3a2c7" stroke-width="1.25" stroke-linejoin="round" stroke-linecap="round" stroke-opacity="0.9"/>
<path d="M1430.6 238.8 L1438.0 236.3 L1443.0 223.9 L1440.5 211.5 L1433.1 204.1 L1425.7 199.1" fill="none" stroke="#c3a2c7" stroke-width="1.25" stroke-linejoin="round" stroke-linecap="round" stroke-opacity="0.9"/>
<path d="M1404.6 174.3 L1413.3 176.8 L1423.2 184.3 L1425.7 199.1" fill="none" stroke="#c3a2c7" stroke-width="1.25" stroke-linejoin="round" stroke-linecap="round" stroke-opacity="0.9"/>
<path d="M1389.7 173.1 L1403.4 174.3 L1420.7 179.3 L1433.1 185.5 L1445.5 194.2 L1454.2 199.1 L1462.8 195.4" fill="none" stroke="#c3a2c7" stroke-width="1.25" stroke-linejoin="round" stroke-linecap="round" stroke-opacity="0.9"/>
<path d="M1425.7 199.1 L1438.0 199.1 L1448.0 206.6 L1460.4 209.0 L1465.3 219.0" fill="none" stroke="#c3a2c7" stroke-width="1.25" stroke-linejoin="round" stroke-linecap="round" stroke-opacity="0.9"/>
<path d="M1433.1 185.5 L1438.0 199.1" fill="none" stroke="#c3a2c7" stroke-width="1.25" stroke-linejoin="round" stroke-linecap="round" stroke-opacity="0.9"/>
<path d="M1430.6 238.8 L1433.1 253.7 L1440.5 261.1 L1439.3 273.5 L1448.0 288.4 L1455.4 298.3 L1462.8 310.7 L1467.8 318.1" fill="none" stroke="#c3a2c7" stroke-width="1.25" stroke-linejoin="round" stroke-linecap="round" stroke-opacity="0.9"/>
<path d="M1430.6 238.8 L1425.7 251.2 L1408.3 263.6 L1400.9 271.0" fill="none" stroke="#c3a2c7" stroke-width="1.25" stroke-linejoin="round" stroke-linecap="round" stroke-opacity="0.9"/>
<path d="M1400.9 271.0 L1388.5 283.4 L1383.5 288.4 L1393.4 298.3 L1413.3 308.2 L1438.0 320.6 L1448.0 326.0" fill="none" stroke="#c3a2c7" stroke-width="1.25" stroke-linejoin="round" stroke-linecap="round" stroke-opacity="0.9"/>
<path d="M1353.8 273.5 L1363.7 278.4 L1378.6 273.5 L1400.9 271.0" fill="none" stroke="#c3a2c7" stroke-width="1.25" stroke-linejoin="round" stroke-linecap="round" stroke-opacity="0.9"/>
<path d="M1350.1 290.8 L1353.8 305.7 L1363.7 298.3 L1373.6 288.4 L1368.7 283.4 L1383.5 288.4" fill="none" stroke="#c3a2c7" stroke-width="1.25" stroke-linejoin="round" stroke-linecap="round" stroke-opacity="0.9"/>
<path d="M1353.8 305.7 L1350.1 326.0" fill="none" stroke="#c3a2c7" stroke-width="1.25" stroke-linejoin="round" stroke-linecap="round" stroke-opacity="0.9"/>
<path d="M1263.3 302.0 L1263.3 326.0" fill="none" stroke="#c3a2c7" stroke-width="1.25" stroke-linejoin="round" stroke-linecap="round" stroke-opacity="0.9"/>
<path d="M1343.9 310.7 L1348.8 326.0" fill="none" stroke="#c3a2c7" stroke-width="1.25" stroke-linejoin="round" stroke-linecap="round" stroke-opacity="0.9"/>
<path d="M1352.5 271.0 L1357.5 263.6 L1355.0 258.6" fill="none" stroke="#c3a2c7" stroke-width="1.25" stroke-linejoin="round" stroke-linecap="round" stroke-opacity="0.9"/>
<path d="M1507.4 241.3 L1524.8 236.3 L1542.1 233.8 L1562.0 238.8 L1569.4 253.7 L1571.9 268.5 L1566.9 273.5 L1569.4 288.4 L1574.4 303.2 L1566.9 318.1 L1571.9 326.0" fill="none" stroke="#c3a2c7" stroke-width="1.25" stroke-linejoin="round" stroke-linecap="round" stroke-opacity="0.9"/>
<path d="M1526.0 149.6 L1526.0 197.9 L1514.9 197.9" fill="none" stroke="#c3a2c7" stroke-width="1.25" stroke-linejoin="round" stroke-linecap="round" stroke-opacity="0.9"/>
<path d="M1526.0 149.6 L1557.0 140.9 L1571.9 162.0 L1586.7 169.4 L1601.6 176.8 L1615.0 181.8" fill="none" stroke="#c3a2c7" stroke-width="1.25" stroke-linejoin="round" stroke-linecap="round" stroke-opacity="0.9"/>
<path d="M1569.4 253.7 L1586.7 246.2 L1601.6 238.8 L1615.0 233.8" fill="none" stroke="#c3a2c7" stroke-width="1.25" stroke-linejoin="round" stroke-linecap="round" stroke-opacity="0.9"/>
<path d="M1574.4 303.2 L1591.7 298.3 L1615.0 295.8" fill="none" stroke="#c3a2c7" stroke-width="1.25" stroke-linejoin="round" stroke-linecap="round" stroke-opacity="0.9"/>
<path d="M1464.4 129.9 L1460.0 123.7 L1452.8 122.2 L1445.5 113.5 L1448.4 100.4 L1454.2 85.9 L1462.9 93.1 L1464.4 85.9 L1481.9 69.8 L1496.4 69.8 L1522.6 83.7 L1531.3 78.6 L1545.9 78.6 L1556.1 85.1 L1559.0 81.5 L1572.1 80.8 L1573.5 75.7 L1559.7 66.2 L1567.7 58.2 L1573.5 50.9 L1568.4 40.7 L1572.1 36.4 L1604.1 31.3 L1615.0 26.2" fill="none" stroke="#c3a2c7" stroke-width="1.25" stroke-linejoin="round" stroke-linecap="round" stroke-opacity="0.9"/>
<path d="M1380.0 94.6 L1391.6 99.0 L1388.7 119.3 L1380.0 120.8" fill="none" stroke="#c3a2c7" stroke-width="1.25" stroke-linejoin="round" stroke-linecap="round" stroke-opacity="0.9"/>
<path d="M1218.9 31.2 L1228.8 32.2 L1243.7 32.2" fill="none" stroke="#c3a2c7" stroke-width="1.25" stroke-linejoin="round" stroke-linecap="round" stroke-opacity="0.9"/>
<path d="M1243.7 32.2 L1245.7 27.8 L1242.7 22.8 L1233.8 20.3 L1232.3 19.8" fill="none" stroke="#c3a2c7" stroke-width="1.25" stroke-linejoin="round" stroke-linecap="round" stroke-opacity="0.9"/>
<path d="M1243.7 32.2 L1248.7 34.2 L1251.6 38.2" fill="none" stroke="#c3a2c7" stroke-width="1.25" stroke-linejoin="round" stroke-linecap="round" stroke-opacity="0.9"/>
<path d="M1230.8 5.9 L1238.8 3.0 L1248.7 3.5 L1260.1 4.5" fill="none" stroke="#c3a2c7" stroke-width="1.25" stroke-linejoin="round" stroke-linecap="round" stroke-opacity="0.9"/>
<path d="M1123.8 23.8 L1129.7 24.8 L1134.2 23.6" fill="none" stroke="#c3a2c7" stroke-width="1.25" stroke-linejoin="round" stroke-linecap="round" stroke-opacity="0.9"/>
<path d="M1221.9 215.1 L1223.7 213.3 L1226.3 208.9 L1228.9 204.6 L1229.8 202.8" fill="none" stroke="#c3a2c7" stroke-width="1.25" stroke-linejoin="round" stroke-linecap="round" stroke-opacity="0.9"/>
<path d="M1229.8 202.8 L1227.2 200.2 L1225.4 195.8 L1225.9 191.4 L1228.1 188.8" fill="none" stroke="#c3a2c7" stroke-width="1.25" stroke-linejoin="round" stroke-linecap="round" stroke-opacity="0.9"/>
<path d="M1228.1 188.8 L1233.3 187.0 L1238.6 186.6 L1243.0 187.5 L1245.6 190.5 L1246.5 194.0 L1246.1 198.4 L1242.1 199.7 L1237.7 201.1 L1234.2 202.4 L1229.8 202.8" fill="none" stroke="#c3a2c7" stroke-width="1.25" stroke-linejoin="round" stroke-linecap="round" stroke-opacity="0.9"/>
<path d="M1228.1 188.8 L1224.6 185.3 L1222.8 181.8" fill="none" stroke="#c3a2c7" stroke-width="1.25" stroke-linejoin="round" stroke-linecap="round" stroke-opacity="0.9"/>
<path d="M1233.3 187.0 L1235.1 183.5 L1234.2 180.0" fill="none" stroke="#c3a2c7" stroke-width="1.25" stroke-linejoin="round" stroke-linecap="round" stroke-opacity="0.9"/>
<path d="M1214.5 188.8 L1215.8 185.3 L1218.9 183.5 L1222.8 181.8 L1221.9 178.2" fill="none" stroke="#c3a2c7" stroke-width="1.25" stroke-linejoin="round" stroke-linecap="round" stroke-opacity="0.9"/>
<path d="M1246.1 198.4 L1250.0 198.0 L1254.4 196.7 L1258.8 194.5 L1261.4 196.2 L1264.9 198.9 L1269.3 198.0 L1272.4 197.5" fill="none" stroke="#c3a2c7" stroke-width="1.25" stroke-linejoin="round" stroke-linecap="round" stroke-opacity="0.9"/>
<path d="M1272.4 197.5 L1273.7 200.2 L1274.6 202.8 L1273.2 204.1" fill="none" stroke="#c3a2c7" stroke-width="1.25" stroke-linejoin="round" stroke-linecap="round" stroke-opacity="0.9"/>
<path d="M1272.4 197.5 L1272.8 192.7 L1277.2 190.1 L1282.5 188.8 L1286.8 188.3" fill="none" stroke="#c3a2c7" stroke-width="1.25" stroke-linejoin="round" stroke-linecap="round" stroke-opacity="0.9"/>
<path d="M1243.0 187.5 L1244.7 183.5 L1243.9 180.0" fill="none" stroke="#c3a2c7" stroke-width="1.25" stroke-linejoin="round" stroke-linecap="round" stroke-opacity="0.9"/>
<path d="M1039.2 173.5 L1049.5 180.0 L1060.7 181.9 L1071.9 185.6 L1076.5 184.7" fill="none" stroke="#c3a2c7" stroke-width="1.25" stroke-linejoin="round" stroke-linecap="round" stroke-opacity="0.9"/>
<path d="M978.6 188.6 L986.3 187.6 L996.0 191.5 L997.9 198.3 L992.1 207.9 L993.1 217.6 L989.2 227.2 L991.2 234.9 L988.3 244.6" fill="none" stroke="#c3a2c7" stroke-width="1.25" stroke-linejoin="round" stroke-linecap="round" stroke-opacity="0.9"/>
<path d="M1034.6 264.9 L1036.5 273.6 L1040.4 285.1 L1041.4 292.9 L1032.7 296.7 L1023.0 302.5 L1017.2 310.2 L1005.6 316.0 L990.2 319.9 L978.6 326.1" fill="none" stroke="#c3a2c7" stroke-width="1.25" stroke-linejoin="round" stroke-linecap="round" stroke-opacity="0.9"/>
<path d="M1121.5 244.6 L1122.4 258.1 L1117.6 269.7 L1114.7 277.4 L1119.5 285.1 L1127.3 296.7 L1133.1 312.2" fill="none" stroke="#c3a2c7" stroke-width="1.25" stroke-linejoin="round" stroke-linecap="round" stroke-opacity="0.9"/>
<path d="M1150.4 287.1 L1148.5 292.9 L1140.8 300.6 L1135.0 304.4 L1133.1 312.2 L1130.2 319.9 L1131.1 326.1" fill="none" stroke="#c3a2c7" stroke-width="1.25" stroke-linejoin="round" stroke-linecap="round" stroke-opacity="0.9"/>
<g font-family="Liberation Sans, sans-serif">
<text font-size="14.6" textLength="96.1" lengthAdjust="spacing" transform="translate(163.6,252.7) scale(1.07,1)" fill="none" stroke="#fff" stroke-opacity="0.8" stroke-width="3" stroke-linejoin="round">United States</text><text font-size="14.6" textLength="96.1" lengthAdjust="spacing" transform="translate(163.6,252.7) scale(1.07,1)" fill="#73597c" stroke="#73597c" stroke-width="0.12">United States</text>
<text font-size="14.6" textLength="115.0" lengthAdjust="spacing" transform="translate(956.9,23.3) scale(1.07,1)" fill="none" stroke="#fff" stroke-opacity="0.8" stroke-width="3" stroke-linejoin="round">United Kingdom</text><text font-size="14.6" textLength="115.0" lengthAdjust="spacing" transform="translate(956.9,23.3) scale(1.07,1)" fill="#73597c" stroke="#73597c" stroke-width="0.12">United Kingdom</text>
<text font-size="14.6" textLength="87.9" lengthAdjust="spacing" transform="translate(1094.9,82.0) scale(1.07,1)" fill="none" stroke="#fff" stroke-opacity="0.8" stroke-width="3" stroke-linejoin="round">Deutschland</text><text font-size="14.6" textLength="87.9" lengthAdjust="spacing" transform="translate(1094.9,82.0) scale(1.07,1)" fill="#73597c" stroke="#73597c" stroke-width="0.12">Deutschland</text>
<text font-size="14.6" textLength="46.2" lengthAdjust="spacing" transform="translate(1043.6,138.0) scale(1.07,1)" fill="none" stroke="#fff" stroke-opacity="0.8" stroke-width="3" stroke-linejoin="round">France</text><text font-size="14.6" textLength="46.2" lengthAdjust="spacing" transform="translate(1043.6,138.0) scale(1.07,1)" fill="#73597c" stroke="#73597c" stroke-width="0.12">France</text>
<text font-size="14.6" textLength="65.4" lengthAdjust="spacing" transform="translate(1253.8,46.2) scale(1.07,1)" fill="none" stroke="#fff" stroke-opacity="0.8" stroke-width="3" stroke-linejoin="round">Беларусь</text><text font-size="14.6" textLength="65.4" lengthAdjust="spacing" transform="translate(1253.8,46.2) scale(1.07,1)" fill="#73597c" stroke="#73597c" stroke-width="0.12">Беларусь</text>
<text font-size="14.6" textLength="55.7" lengthAdjust="spacing" transform="translate(1309.8,120.3) scale(1.07,1)" fill="none" stroke="#fff" stroke-opacity="0.8" stroke-width="3" stroke-linejoin="round">Україна</text><text font-size="14.6" textLength="55.7" lengthAdjust="spacing" transform="translate(1309.8,120.3) scale(1.07,1)" fill="#73597c" stroke="#73597c" stroke-width="0.12">Україна</text>
<text font-size="14.6" textLength="60.1" lengthAdjust="spacing" transform="translate(1225.9,149.2) scale(1.07,1)" fill="none" stroke="#fff" stroke-opacity="0.8" stroke-width="3" stroke-linejoin="round">România</text><text font-size="14.6" textLength="60.1" lengthAdjust="spacing" transform="translate(1225.9,149.2) scale(1.07,1)" fill="#73597c" stroke="#73597c" stroke-width="0.12">România</text>
<text font-size="14.6" textLength="49.6" lengthAdjust="spacing" transform="translate(997.9,219.1) scale(1.07,1)" fill="none" stroke="#fff" stroke-opacity="0.8" stroke-width="3" stroke-linejoin="round">España</text><text font-size="14.6" textLength="49.6" lengthAdjust="spacing" transform="translate(997.9,219.1) scale(1.07,1)" fill="#73597c" stroke="#73597c" stroke-width="0.12">España</text>
<text font-size="14.6" textLength="35.2" lengthAdjust="spacing" transform="translate(1153.3,198.3) scale(1.07,1)" fill="none" stroke="#fff" stroke-opacity="0.8" stroke-width="3" stroke-linejoin="round">Italia</text><text font-size="14.6" textLength="35.2" lengthAdjust="spacing" transform="translate(1153.3,198.3) scale(1.07,1)" fill="#73597c" stroke="#73597c" stroke-width="0.12">Italia</text>
<text font-size="14.6" textLength="49.6" lengthAdjust="spacing" transform="translate(1030.7,321.8) scale(1.07,1)" fill="none" stroke="#fff" stroke-opacity="0.8" stroke-width="3" stroke-linejoin="round">Algérie</text><text font-size="14.6" textLength="49.6" lengthAdjust="spacing" transform="translate(1030.7,321.8) scale(1.07,1)" fill="#73597c" stroke="#73597c" stroke-width="0.12">Algérie</text>
<text font-size="14.6" textLength="39.3" lengthAdjust="spacing" transform="translate(1217.5,231.4) scale(1.07,1)" fill="none" stroke="#fff" stroke-opacity="0.8" stroke-width="3" stroke-linejoin="round">Ελλάς</text><text font-size="14.6" textLength="39.3" lengthAdjust="spacing" transform="translate(1217.5,231.4) scale(1.07,1)" fill="#73597c" stroke="#73597c" stroke-width="0.12">Ελλάς</text>
<text font-size="14.6" textLength="50.9" lengthAdjust="spacing" transform="translate(1325.3,228.9) scale(1.07,1)" fill="none" stroke="#fff" stroke-opacity="0.8" stroke-width="3" stroke-linejoin="round">Türkiye</text><text font-size="14.6" textLength="50.9" lengthAdjust="spacing" transform="translate(1325.3,228.9) scale(1.07,1)" fill="#73597c" stroke="#73597c" stroke-width="0.12">Türkiye</text>
<text font-size="14.6" textLength="96.1" lengthAdjust="spacing" transform="translate(1498.8,228.9) scale(1.07,1)" fill="none" stroke="#fff" stroke-opacity="0.8" stroke-width="3" stroke-linejoin="round">Türkmenistan</text><text font-size="14.6" textLength="96.1" lengthAdjust="spacing" transform="translate(1498.8,228.9) scale(1.07,1)" fill="#73597c" stroke="#73597c" stroke-width="0.12">Türkmenistan</text>
<text font-size="14.6" textLength="89.2" lengthAdjust="spacing" transform="translate(1544.6,202.9) scale(1.07,1)" fill="none" stroke="#fff" stroke-opacity="0.8" stroke-width="3" stroke-linejoin="round">Oʻzbekiston</text><text font-size="14.6" textLength="89.2" lengthAdjust="spacing" transform="translate(1544.6,202.9) scale(1.07,1)" fill="#73597c" stroke="#73597c" stroke-width="0.12">Oʻzbekiston</text>
<text font-size="14.6" textLength="81.2" lengthAdjust="spacing" transform="translate(1573.1,124.8) scale(1.07,1)" fill="none" stroke="#fff" stroke-opacity="0.8" stroke-width="3" stroke-linejoin="round">Қазақстан</text><text font-size="14.6" textLength="81.2" lengthAdjust="spacing" transform="translate(1573.1,124.8) scale(1.07,1)" fill="#73597c" stroke="#73597c" stroke-width="0.12">Қазақстан</text>
</g>
<g font-family="Liberation Sans, sans-serif" font-size="13.5" fill="#6b5074" stroke="#fff" stroke-opacity="0.7" stroke-width="2.4" paint-order="stroke">
<text x="1412" y="291" text-anchor="middle">العراق</text>
<text x="1510" y="301" text-anchor="middle">ایران</text>
<text x="1571" y="285">افغانستان</text>
</g>
</g>
<path d="M1562.6 -5.0 L1562.6 0.0 L1532.8 36.4 L1503.7 72.8 L1486.4 100.0 L1467.3 130.0 L1438.0 176.8 L1413.3 219.0 L1388.5 268.5 L1368.7 310.7 L1361.2 326.0 L1359.0 332.0 L1625.0 332.0 L1625.0 -5.0Z" fill="#000" fill-opacity="0.10"/>
<path d="M1065.1 54.5 L1100 48.9 L1137 45.2 L1174.6 43.3 L1211.9 44.8 L1249.2 49.4 L1286.5 55.9 L1315.4 60.6" fill="none" stroke="#093f00" stroke-opacity="0.75" stroke-width="2.6" stroke-linecap="round"/>
<path d="M1087.8 77.1 L1100 72.7 L1146.6 63.4 L1210 56.3 L1254.8 55.9 L1305 59.7 L1315.4 60.6" fill="none" stroke="#093f00" stroke-opacity="0.75" stroke-width="2.6" stroke-linecap="round"/>
<path d="M1155 111.9 L1210 87.6 L1254.8 74.6 L1286.5 66.2 L1315.4 60.6" fill="none" stroke="#093f00" stroke-opacity="0.75" stroke-width="2.6" stroke-linecap="round"/>
<path d="M1148.9 118.4 L1210 88.6 L1254.8 75.2 L1286.5 66.6 L1315.4 60.6" fill="none" stroke="#093f00" stroke-opacity="0.75" stroke-width="2.6" stroke-linecap="round"/>
<path d="M1190.2 200.8 L1219.9 163.5 L1262 113 L1315.4 60.6" fill="none" stroke="#093f00" stroke-opacity="0.95" stroke-width="2.6" stroke-linecap="round"/>
<path d="M1249.3 183 L1260.4 164.1 L1295.8 95.1 L1315.4 60.6" fill="none" stroke="#093f00" stroke-opacity="0.95" stroke-width="2.6" stroke-linecap="round"/>
<path d="M1311.6 73.3 L1315.4 60.6" fill="none" stroke="#093f00" stroke-opacity="0.9" stroke-width="2.6" stroke-linecap="round"/>
<circle cx="1065.1" cy="54.5" r="3.2" fill="#f00"/>
<circle cx="1087.8" cy="77.1" r="3.2" fill="#f00"/>
<circle cx="1155" cy="111.9" r="3.2" fill="#f00"/>
<circle cx="1148.9" cy="118.4" r="3.2" fill="#f00"/>
<circle cx="1190.2" cy="200.8" r="3.2" fill="#f00"/>
<circle cx="1249.3" cy="183" r="3.2" fill="#f00"/>
<circle cx="1311.6" cy="73.3" r="3.2" fill="#f00"/>
<circle cx="1315.4" cy="60.6" r="3.3" fill="#00f"/>
</svg>
</div>
<div class="zoomctl"><div class="b" style="top:0;height:38.5px;border-bottom:1px solid #ccc;border-radius:3px 3px 0 0"><svg width="38" height="38" style="position:absolute;left:0;top:0"><path d="M11.4 19.8H27.7M19.5 12.3V27.2" stroke="#000" stroke-width="2.3" fill="none"/></svg></div><div class="b" style="top:38.5px;height:36.5px;border-radius:0 0 3px 3px"><svg width="38" height="37" style="position:absolute;left:0;top:0"><path d="M11.4 20.4H27.7" stroke="#000" stroke-width="2.4" fill="none"/></svg></div></div>
<div class="bandbar">
<div style="left:453.9px;width:43.1px;background:#aaaaaa"></div>
<div style="left:496.7px;width:42.6px;background:#ffe000"></div>
<div style="left:539.0px;width:35.3px;background:#093f00"></div>
<div style="left:574.0px;width:35.3px;background:#777777"></div>
<div style="left:609.0px;width:35.1px;background:#ffa500"></div>
<div style="left:643.8px;width:34.5px;background:#ff0000"></div>
<div style="left:678.0px;width:34.9px;background:#800080"></div>
<div style="left:712.6px;width:35.7px;background:#0000ff"></div>
<div style="left:748.0px;width:35.3px;background:#444444"></div>
<div style="left:783.0px;width:34.5px;background:#00ffff"></div>
<div style="left:817.2px;width:35.1px;background:#ff00ff"></div>
<div style="left:852.0px;width:34.3px;background:#ffc0cb"></div>
<div style="left:886.0px;width:34.1px;background:#a276ff"></div>
<div style="left:919.8px;width:33.4px;background:#92ff7f"></div>
</div>
<div class="t" style="left:375.6px;width:200px;text-align:center;top:357.00px;font-size:14.1px;">630m</div>
<div class="cb" style="left:467.4px;top:385.0px"></div>
<div class="t" style="left:418.1px;width:200px;text-align:center;top:357.00px;font-size:14.1px;">160m</div>
<div class="cb" style="left:510.2px;top:385.0px"></div>
<div class="t" style="left:456.8px;width:200px;text-align:center;top:357.00px;font-size:14.1px;">80m</div>
<div class="cb on" style="left:549.0px;top:385.0px"><svg width="17" height="17" viewBox="0 0 17 17" style="position:absolute;left:-1.1px;top:-1.1px"><path d="M4.0 9.0L7.1 12.1L13.5 4.9" stroke="#fff" stroke-width="2.3" fill="none" stroke-linecap="round" stroke-linejoin="round"/></svg></div>
<div class="t" style="left:491.8px;width:200px;text-align:center;top:357.00px;font-size:14.1px;">60m</div>
<div class="cb" style="left:583.3px;top:385.0px"></div>
<div class="t" style="left:526.7px;width:200px;text-align:center;top:357.00px;font-size:14.1px;">40m</div>
<div class="cb" style="left:618.5px;top:385.0px"></div>
<div class="t" style="left:561.2px;width:200px;text-align:center;top:357.00px;font-size:14.1px;">30m</div>
<div class="cb" style="left:653.2px;top:385.0px"></div>
<div class="t" style="left:595.6px;width:200px;text-align:center;top:357.00px;font-size:14.1px;">20m</div>
<div class="cb" style="left:688.2px;top:385.0px"></div>
<div class="t" style="left:630.6px;width:200px;text-align:center;top:357.00px;font-size:14.1px;">17m</div>
<div class="cb" style="left:722.5px;top:385.0px"></div>
<div class="t" style="left:665.8px;width:200px;text-align:center;top:357.00px;font-size:14.1px;">15m</div>
<div class="cb" style="left:757.5px;top:385.0px"></div>
<div class="t" style="left:700.4px;width:200px;text-align:center;top:357.00px;font-size:14.1px;">12m</div>
<div class="cb" style="left:792.2px;top:385.0px"></div>
<div class="t" style="left:734.9px;width:200px;text-align:center;top:357.00px;font-size:14.1px;">10m</div>
<div class="cb" style="left:827.0px;top:385.0px"></div>
<div class="t" style="left:769.3px;width:200px;text-align:center;top:357.00px;font-size:14.1px;">6m</div>
<div class="cb" style="left:861.2px;top:385.0px"></div>
<div class="t" style="left:803.2px;width:200px;text-align:center;top:357.00px;font-size:14.1px;">4m</div>
<div class="cb" style="left:895.0px;top:385.0px"></div>
<div class="t" style="left:836.6px;width:200px;text-align:center;top:357.00px;font-size:14.1px;">2m</div>
<div class="cb" style="left:928.4px;top:385.0px"></div>
<div class="t" style="left:542.1px;width:200px;text-align:center;top:414.00px;font-size:13.9px;">cw</div>
<div class="cb on" style="left:633.7px;top:442.0px"><svg width="17" height="17" viewBox="0 0 17 17" style="position:absolute;left:-1.1px;top:-1.1px"><path d="M4.0 9.0L7.1 12.1L13.5 4.9" stroke="#fff" stroke-width="2.3" fill="none" stroke-linecap="round" stroke-linejoin="round"/></svg></div>
<div class="t" style="left:575.5px;width:200px;text-align:center;top:414.00px;font-size:13.9px;">rtty</div>
<div class="cb" style="left:668.0px;top:442.0px"></div>
<div class="t" style="left:614.7px;width:200px;text-align:center;top:414.00px;font-size:13.9px;">psk31</div>
<div class="cb" style="left:707.0px;top:442.0px"></div>
<div class="t" style="left:660.1px;width:200px;text-align:center;top:414.00px;font-size:13.9px;">psk63</div>
<div class="cb" style="left:752.0px;top:442.0px"></div>
<div class="cb" style="left:560.0px;top:471.3px"></div>
<div class="t" style="left:584.5px;top:474.00px;font-size:13.9px;line-height:16px;">CQ</div>
<div class="cb" style="left:615.2px;top:471.3px"></div>
<div class="t" style="left:639.8px;top:474.00px;font-size:13.9px;line-height:16px;">DX</div>
<div class="cb" style="left:668.8px;top:471.3px"></div>
<div class="t" style="left:693.9px;top:474.00px;font-size:13.9px;line-height:16px;">BCN</div>
<div class="cb" style="left:732.2px;top:471.3px"></div>
<div class="t" style="left:756.0px;top:474.00px;font-size:13.9px;line-height:16px;">/B</div>
<div class="cb" style="left:779.4px;top:471.3px"></div>
<div class="t" style="left:804.0px;top:474.00px;font-size:13.9px;line-height:16px;">NCDXF</div>
<div class="t" style="left:1494.2px;top:337.00px;font-size:14px;line-height:16px;">Consider supporting this site</div>
<div class="abs" style="left:1530.2px;top:353.9px;width:120px;height:31px;border-radius:15.5px;background:linear-gradient(#ffc53d,#ffb92e);box-shadow:0 0.5px 1px rgba(120,90,20,.6)"></div>
<div class="t b" style="left:1556.3px;top:358.6px;font-size:18.6px;line-height:24px;transform-origin:0 50%;transform:scaleX(0.93);color:#141414;letter-spacing:0.2px">Donate</div>
<div class="abs" style="left:14px;top:504px;width:1601px;height:2px;background:#056805"></div>
<div class="abs" style="left:13px;top:503px;width:1602px;height:1px;background:#fafbf4"></div>
<div class="abs" style="left:13px;top:506px;width:1602px;height:78px;background:#f9f9f9;border-left:1px solid #f1f1ee"></div>
<div class="hl" style="top:533px;background:#e2e2e2"></div>
<div class="hl" style="top:582px;background:#e6e6e6"></div>
<div class="abs" style="left:14px;top:584px;width:1601px;height:32px;background:#f0f0f0;border-top:1px solid #c8c8c8;border-bottom:1px solid #c4c4c4"></div>
<div class="abs" style="left:810.4px;top:514.8px;width:8.8px;height:8.8px;border-radius:50%;background:#f00"></div>
<div class="t" style="left:825.4px;top:512.00px;font-size:13.9px;line-height:16px;font-weight:bold;">Spotter (de)</div>
<div class="t" style="left:20.2px;top:548.00px;font-size:13.9px;line-height:16px;font-weight:bold;">callsign</div>
<div class="abs" style="left:306px;top:544px;width:1109px;height:26px;border:1px solid #76767c;border-radius:2.5px;background:#fff"></div>
<div class="abs" style="left:1419px;top:544px;width:300px;height:26px;border:1px solid #76767c;border-radius:2.5px;background:#fff"></div>
<div class="t" style="left:309.4px;top:547.00px;font-size:17.7px;line-height:22px;font-weight:bold;color:#757575;">spotter-callsign</div>
<div class="t" style="left:1423.8px;top:547.50px;font-size:16.6px;line-height:22px;font-weight:bold;color:#000;-webkit-text-stroke:0.3px #000;">EU8T</div>
<div class="abs" style="left:15.4px;top:596px;width:8.8px;height:8.8px;border-radius:50%;background:#f00"></div>
<div class="t" style="left:29.6px;top:593.00px;font-size:13.9px;line-height:16px;font-weight:bold;">spotter</div>
<div class="abs" style="left:352px;top:596px;width:8.8px;height:8.8px;border-radius:50%;background:#00f"></div>
<div class="t" style="left:366.1px;top:593.00px;font-size:13.9px;line-height:16px;font-weight:bold;">spotted</div>
<div class="t" style="right:726.4px;top:591.00px;font-size:13.9px;text-align:right;font-weight:bold;">distance km</div>
<div class="t" style="right:484.2px;top:591.00px;font-size:13.9px;text-align:right;font-weight:bold;">freq</div>
<div class="t" style="left:1081.6px;width:200px;text-align:center;top:591.00px;font-size:13.9px;font-weight:bold;">mode</div>
<div class="t" style="left:1211.2px;width:200px;text-align:center;top:591.00px;font-size:13.9px;font-weight:bold;">type</div>
<div class="t" style="left:1456.8px;width:200px;text-align:center;top:591.00px;font-size:13.9px;font-weight:bold;">snr</div>
<div class="hl" style="top:641px;background:#dddcd6"></div>
<svg class="abs" style="left:20.0px;top:619.50px" width="20" height="13.75" viewBox="0 0 16 11" preserveAspectRatio="none"><defs><linearGradient id="sh" x1="0" y1="0" x2="0" y2="1"><stop offset="0" stop-color="#fff" stop-opacity=".45"/><stop offset=".5" stop-color="#fff" stop-opacity=".05"/><stop offset="1" stop-color="#000" stop-opacity=".12"/></linearGradient></defs><rect width="16" height="3.7" fill="#fff"/><rect y="3.7" width="16" height="3.7" fill="#2e9e4f"/><rect y="7.4" width="16" height="3.6" fill="#e2352b"/><rect width="16" height="11" fill="url(#sh)"/><rect x=".25" y=".25" width="15.5" height="10.5" fill="none" stroke="#000" stroke-opacity=".18" stroke-width=".5"/></svg>
<div class="t" style="left:47.5px;top:620.00px;font-size:13.9px;line-height:16px;"><a class="cs">LZ7AA</a></div>
<svg class="abs" style="left:356.0px;top:619.50px" width="20" height="13.75" viewBox="0 0 16 11" preserveAspectRatio="none"><defs><linearGradient id="sh" x1="0" y1="0" x2="0" y2="1"><stop offset="0" stop-color="#fff" stop-opacity=".45"/><stop offset=".5" stop-color="#fff" stop-opacity=".05"/><stop offset="1" stop-color="#000" stop-opacity=".12"/></linearGradient></defs><rect width="16" height="7.4" fill="#f0201e"/><rect y="7.4" width="16" height="3.6" fill="#1f9a2e"/><rect width="2.8" height="11" fill="#f9d2d0"/><path d="M1.3 0.3V11" stroke="#e03a36" stroke-width=".8" stroke-dasharray="1 1"/><path d="M2.8 10.7H15.7V0.4" stroke="#0a3a0a" stroke-opacity=".55" stroke-width=".6" fill="none"/><rect width="16" height="11" fill="url(#sh)"/><rect x=".25" y=".25" width="15.5" height="10.5" fill="none" stroke="#000" stroke-opacity=".18" stroke-width=".5"/></svg>
<div class="t" style="left:383.5px;top:620.00px;font-size:13.9px;line-height:16px;"><a class="cs">EU8T</a></div>
<div class="t" style="right:732.0px;top:620.00px;font-size:13.9px;text-align:right;"><b>1226</b> km</div>
<div class="t" style="right:484.4px;top:620.00px;font-size:13.9px;text-align:right;">3554.1</div>
<div class="t" style="left:1080.5px;width:200px;text-align:center;top:620.00px;font-size:13.9px;">CW</div>
<div class="t" style="left:1213.2px;width:200px;text-align:center;top:620.00px;font-size:13.9px;">CQ</div>
<div class="t" style="right:38.7px;top:620.00px;font-size:13.9px;text-align:right;">24 dB</div>
<div class="hl" style="top:667px;background:#dddcd6"></div>
<svg class="abs" style="left:20.0px;top:645.50px" width="20" height="13.75" viewBox="0 0 16 11" preserveAspectRatio="none"><defs><linearGradient id="sh" x1="0" y1="0" x2="0" y2="1"><stop offset="0" stop-color="#fff" stop-opacity=".45"/><stop offset=".5" stop-color="#fff" stop-opacity=".05"/><stop offset="1" stop-color="#000" stop-opacity=".12"/></linearGradient></defs><rect width="16" height="3.7" fill="#fff"/><rect y="3.7" width="16" height="3.7" fill="#2e9e4f"/><rect y="7.4" width="16" height="3.6" fill="#e2352b"/><rect width="16" height="11" fill="url(#sh)"/><rect x=".25" y=".25" width="15.5" height="10.5" fill="none" stroke="#000" stroke-opacity=".18" stroke-width=".5"/></svg>
<div class="t" style="left:47.5px;top:646.00px;font-size:13.9px;line-height:16px;"><a class="cs">LZ7AA</a></div>
<svg class="abs" style="left:356.0px;top:645.50px" width="20" height="13.75" viewBox="0 0 16 11" preserveAspectRatio="none"><defs><linearGradient id="sh" x1="0" y1="0" x2="0" y2="1"><stop offset="0" stop-color="#fff" stop-opacity=".45"/><stop offset=".5" stop-color="#fff" stop-opacity=".05"/><stop offset="1" stop-color="#000" stop-opacity=".12"/></linearGradient></defs><rect width="16" height="7.4" fill="#f0201e"/><rect y="7.4" width="16" height="3.6" fill="#1f9a2e"/><rect width="2.8" height="11" fill="#f9d2d0"/><path d="M1.3 0.3V11" stroke="#e03a36" stroke-width=".8" stroke-dasharray="1 1"/><path d="M2.8 10.7H15.7V0.4" stroke="#0a3a0a" stroke-opacity=".55" stroke-width=".6" fill="none"/><rect width="16" height="11" fill="url(#sh)"/><rect x=".25" y=".25" width="15.5" height="10.5" fill="none" stroke="#000" stroke-opacity=".18" stroke-width=".5"/></svg>
<div class="t" style="left:383.5px;top:646.00px;font-size:13.9px;line-height:16px;"><a class="cs">EU8T</a></div>
<div class="t" style="right:732.0px;top:646.00px;font-size:13.9px;text-align:right;"><b>1226</b> km</div>
<div class="t" style="right:484.4px;top:646.00px;font-size:13.9px;text-align:right;">3536.3</div>
<div class="t" style="left:1080.5px;width:200px;text-align:center;top:646.00px;font-size:13.9px;">CW</div>
<div class="t" style="left:1213.2px;width:200px;text-align:center;top:646.00px;font-size:13.9px;">CQ</div>
<div class="t" style="right:38.7px;top:646.00px;font-size:13.9px;text-align:right;">23 dB</div>
<div class="hl" style="top:693px;background:#dddcd6"></div>
<svg class="abs" style="left:20.0px;top:671.50px" width="20" height="13.75" viewBox="0 0 16 11" preserveAspectRatio="none"><defs><linearGradient id="sh" x1="0" y1="0" x2="0" y2="1"><stop offset="0" stop-color="#fff" stop-opacity=".45"/><stop offset=".5" stop-color="#fff" stop-opacity=".05"/><stop offset="1" stop-color="#000" stop-opacity=".12"/></linearGradient></defs><rect width="5.4" height="11" fill="#1f9b3a"/><rect x="5.4" width="5.3" height="11" fill="#fff"/><rect x="10.7" width="5.3" height="11" fill="#ee2a24"/><rect width="16" height="11" fill="url(#sh)"/><rect x=".25" y=".25" width="15.5" height="10.5" fill="none" stroke="#000" stroke-opacity=".18" stroke-width=".5"/></svg>
<div class="t" style="left:47.5px;top:672.00px;font-size:13.9px;line-height:16px;"><a class="cs">IK7YTT</a></div>
<svg class="abs" style="left:356.0px;top:671.50px" width="20" height="13.75" viewBox="0 0 16 11" preserveAspectRatio="none"><defs><linearGradient id="sh" x1="0" y1="0" x2="0" y2="1"><stop offset="0" stop-color="#fff" stop-opacity=".45"/><stop offset=".5" stop-color="#fff" stop-opacity=".05"/><stop offset="1" stop-color="#000" stop-opacity=".12"/></linearGradient></defs><rect width="16" height="7.4" fill="#f0201e"/><rect y="7.4" width="16" height="3.6" fill="#1f9a2e"/><rect width="2.8" height="11" fill="#f9d2d0"/><path d="M1.3 0.3V11" stroke="#e03a36" stroke-width=".8" stroke-dasharray="1 1"/><path d="M2.8 10.7H15.7V0.4" stroke="#0a3a0a" stroke-opacity=".55" stroke-width=".6" fill="none"/><rect width="16" height="11" fill="url(#sh)"/><rect x=".25" y=".25" width="15.5" height="10.5" fill="none" stroke="#000" stroke-opacity=".18" stroke-width=".5"/></svg>
<div class="t" style="left:383.5px;top:672.00px;font-size:13.9px;line-height:16px;"><a class="cs">EU8T</a></div>
<div class="t" style="right:732.0px;top:672.00px;font-size:13.9px;text-align:right;"><b>1682</b> km</div>
<div class="t" style="right:484.4px;top:672.00px;font-size:13.9px;text-align:right;">3554.1</div>
<div class="t" style="left:1080.5px;width:200px;text-align:center;top:672.00px;font-size:13.9px;">CW</div>
<div class="t" style="left:1213.2px;width:200px;text-align:center;top:672.00px;font-size:13.9px;">CQ</div>
<div class="t" style="right:38.7px;top:672.00px;font-size:13.9px;text-align:right;">24 dB</div>
<div class="hl" style="top:719px;background:#dddcd6"></div>
<svg class="abs" style="left:20.0px;top:698.50px" width="20" height="13.75" viewBox="0 0 16 11" preserveAspectRatio="none"><defs><linearGradient id="sh" x1="0" y1="0" x2="0" y2="1"><stop offset="0" stop-color="#fff" stop-opacity=".45"/><stop offset=".5" stop-color="#fff" stop-opacity=".05"/><stop offset="1" stop-color="#000" stop-opacity=".12"/></linearGradient></defs><rect width="5.4" height="11" fill="#1f9b3a"/><rect x="5.4" width="5.3" height="11" fill="#fff"/><rect x="10.7" width="5.3" height="11" fill="#ee2a24"/><rect width="16" height="11" fill="url(#sh)"/><rect x=".25" y=".25" width="15.5" height="10.5" fill="none" stroke="#000" stroke-opacity=".18" stroke-width=".5"/></svg>
<div class="t" style="left:47.5px;top:699.00px;font-size:13.9px;line-height:16px;"><a class="cs">IK7YTT</a></div>
<svg class="abs" style="left:356.0px;top:698.50px" width="20" height="13.75" viewBox="0 0 16 11" preserveAspectRatio="none"><defs><linearGradient id="sh" x1="0" y1="0" x2="0" y2="1"><stop offset="0" stop-color="#fff" stop-opacity=".45"/><stop offset=".5" stop-color="#fff" stop-opacity=".05"/><stop offset="1" stop-color="#000" stop-opacity=".12"/></linearGradient></defs><rect width="16" height="7.4" fill="#f0201e"/><rect y="7.4" width="16" height="3.6" fill="#1f9a2e"/><rect width="2.8" height="11" fill="#f9d2d0"/><path d="M1.3 0.3V11" stroke="#e03a36" stroke-width=".8" stroke-dasharray="1 1"/><path d="M2.8 10.7H15.7V0.4" stroke="#0a3a0a" stroke-opacity=".55" stroke-width=".6" fill="none"/><rect width="16" height="11" fill="url(#sh)"/><rect x=".25" y=".25" width="15.5" height="10.5" fill="none" stroke="#000" stroke-opacity=".18" stroke-width=".5"/></svg>
<div class="t" style="left:383.5px;top:699.00px;font-size:13.9px;line-height:16px;"><a class="cs">EU8T</a></div>
<div class="t" style="right:732.0px;top:699.00px;font-size:13.9px;text-align:right;"><b>1682</b> km</div>
<div class="t" style="right:484.4px;top:699.00px;font-size:13.9px;text-align:right;">3536.3</div>
<div class="t" style="left:1080.5px;width:200px;text-align:center;top:699.00px;font-size:13.9px;">CW</div>
<div class="t" style="left:1213.2px;width:200px;text-align:center;top:699.00px;font-size:13.9px;">CQ</div>
<div class="t" style="right:38.7px;top:699.00px;font-size:13.9px;text-align:right;">23 dB</div>
<div class="hl" style="top:746px;background:#dddcd6"></div>
<svg class="abs" style="left:20.0px;top:724.50px" width="20" height="13.75" viewBox="0 0 16 11" preserveAspectRatio="none"><defs><linearGradient id="sh" x1="0" y1="0" x2="0" y2="1"><stop offset="0" stop-color="#fff" stop-opacity=".45"/><stop offset=".5" stop-color="#fff" stop-opacity=".05"/><stop offset="1" stop-color="#000" stop-opacity=".12"/></linearGradient></defs><rect width="16" height="3.7" fill="#fff"/><rect y="3.7" width="16" height="3.7" fill="#2e9e4f"/><rect y="7.4" width="16" height="3.6" fill="#e2352b"/><rect width="16" height="11" fill="url(#sh)"/><rect x=".25" y=".25" width="15.5" height="10.5" fill="none" stroke="#000" stroke-opacity=".18" stroke-width=".5"/></svg>
<div class="t" style="left:47.5px;top:725.00px;font-size:13.9px;line-height:16px;"><a class="cs">LZ5DI</a></div>
<svg class="abs" style="left:356.0px;top:724.50px" width="20" height="13.75" viewBox="0 0 16 11" preserveAspectRatio="none"><defs><linearGradient id="sh" x1="0" y1="0" x2="0" y2="1"><stop offset="0" stop-color="#fff" stop-opacity=".45"/><stop offset=".5" stop-color="#fff" stop-opacity=".05"/><stop offset="1" stop-color="#000" stop-opacity=".12"/></linearGradient></defs><rect width="16" height="7.4" fill="#f0201e"/><rect y="7.4" width="16" height="3.6" fill="#1f9a2e"/><rect width="2.8" height="11" fill="#f9d2d0"/><path d="M1.3 0.3V11" stroke="#e03a36" stroke-width=".8" stroke-dasharray="1 1"/><path d="M2.8 10.7H15.7V0.4" stroke="#0a3a0a" stroke-opacity=".55" stroke-width=".6" fill="none"/><rect width="16" height="11" fill="url(#sh)"/><rect x=".25" y=".25" width="15.5" height="10.5" fill="none" stroke="#000" stroke-opacity=".18" stroke-width=".5"/></svg>
<div class="t" style="left:383.5px;top:725.00px;font-size:13.9px;line-height:16px;"><a class="cs">EU8T</a></div>
<div class="t" style="right:732.0px;top:725.00px;font-size:13.9px;text-align:right;"><b>1229</b> km</div>
<div class="t" style="right:484.4px;top:725.00px;font-size:13.9px;text-align:right;">3554.1</div>
<div class="t" style="left:1080.5px;width:200px;text-align:center;top:725.00px;font-size:13.9px;">CW</div>
<div class="t" style="left:1213.2px;width:200px;text-align:center;top:725.00px;font-size:13.9px;">CQ</div>
<div class="t" style="right:38.7px;top:725.00px;font-size:13.9px;text-align:right;">24 dB</div>
<div class="hl" style="top:772px;background:#dddcd6"></div>
<svg class="abs" style="left:20.0px;top:750.50px" width="20" height="13.75" viewBox="0 0 16 11" preserveAspectRatio="none"><defs><linearGradient id="sh" x1="0" y1="0" x2="0" y2="1"><stop offset="0" stop-color="#fff" stop-opacity=".45"/><stop offset=".5" stop-color="#fff" stop-opacity=".05"/><stop offset="1" stop-color="#000" stop-opacity=".12"/></linearGradient></defs><rect width="5.4" height="11" fill="#222"/><rect x="5.4" width="5.3" height="11" fill="#fde21e"/><rect x="10.7" width="5.3" height="11" fill="#ec1c24"/><rect width="16" height="11" fill="url(#sh)"/><rect x=".25" y=".25" width="15.5" height="10.5" fill="none" stroke="#000" stroke-opacity=".18" stroke-width=".5"/></svg>
<div class="t" style="left:47.5px;top:751.00px;font-size:13.9px;line-height:16px;"><a class="cs">ON7KEC</a></div>
<svg class="abs" style="left:356.0px;top:750.50px" width="20" height="13.75" viewBox="0 0 16 11" preserveAspectRatio="none"><defs><linearGradient id="sh" x1="0" y1="0" x2="0" y2="1"><stop offset="0" stop-color="#fff" stop-opacity=".45"/><stop offset=".5" stop-color="#fff" stop-opacity=".05"/><stop offset="1" stop-color="#000" stop-opacity=".12"/></linearGradient></defs><rect width="16" height="7.4" fill="#f0201e"/><rect y="7.4" width="16" height="3.6" fill="#1f9a2e"/><rect width="2.8" height="11" fill="#f9d2d0"/><path d="M1.3 0.3V11" stroke="#e03a36" stroke-width=".8" stroke-dasharray="1 1"/><path d="M2.8 10.7H15.7V0.4" stroke="#0a3a0a" stroke-opacity=".55" stroke-width=".6" fill="none"/><rect width="16" height="11" fill="url(#sh)"/><rect x=".25" y=".25" width="15.5" height="10.5" fill="none" stroke="#000" stroke-opacity=".18" stroke-width=".5"/></svg>
<div class="t" style="left:383.5px;top:751.00px;font-size:13.9px;line-height:16px;"><a class="cs">EU8T</a></div>
<div class="t" style="right:732.0px;top:751.00px;font-size:13.9px;text-align:right;"><b>1839</b> km</div>
<div class="t" style="right:484.4px;top:751.00px;font-size:13.9px;text-align:right;">3554.1</div>
<div class="t" style="left:1080.5px;width:200px;text-align:center;top:751.00px;font-size:13.9px;">CW</div>
<div class="t" style="left:1213.2px;width:200px;text-align:center;top:751.00px;font-size:13.9px;">CQ</div>
<div class="t" style="right:38.7px;top:751.00px;font-size:13.9px;text-align:right;">30 dB</div>
<div class="hl" style="top:798px;background:#dddcd6"></div>
<svg class="abs" style="left:20.0px;top:776.50px" width="20" height="13.75" viewBox="0 0 16 11" preserveAspectRatio="none"><defs><linearGradient id="sh" x1="0" y1="0" x2="0" y2="1"><stop offset="0" stop-color="#fff" stop-opacity=".45"/><stop offset=".5" stop-color="#fff" stop-opacity=".05"/><stop offset="1" stop-color="#000" stop-opacity=".12"/></linearGradient></defs><rect y="0.8" width="16" height="3.2" fill="#3a3a3a"/><rect y="4" width="16" height="3.4" fill="#e62a22"/><rect y="7.4" width="16" height="3.6" fill="#f7c92d"/><rect x=".3" y="1.1" width="15.4" height="9.6" fill="none" stroke="#4a3a1a" stroke-opacity=".55" stroke-width=".6"/><rect width="16" height="11" fill="url(#sh)"/><rect x=".25" y=".25" width="15.5" height="10.5" fill="none" stroke="#000" stroke-opacity=".18" stroke-width=".5"/></svg>
<div class="t" style="left:47.5px;top:777.00px;font-size:13.9px;line-height:16px;"><a class="cs">DO4DXA</a></div>
<svg class="abs" style="left:356.0px;top:776.50px" width="20" height="13.75" viewBox="0 0 16 11" preserveAspectRatio="none"><defs><linearGradient id="sh" x1="0" y1="0" x2="0" y2="1"><stop offset="0" stop-color="#fff" stop-opacity=".45"/><stop offset=".5" stop-color="#fff" stop-opacity=".05"/><stop offset="1" stop-color="#000" stop-opacity=".12"/></linearGradient></defs><rect width="16" height="7.4" fill="#f0201e"/><rect y="7.4" width="16" height="3.6" fill="#1f9a2e"/><rect width="2.8" height="11" fill="#f9d2d0"/><path d="M1.3 0.3V11" stroke="#e03a36" stroke-width=".8" stroke-dasharray="1 1"/><path d="M2.8 10.7H15.7V0.4" stroke="#0a3a0a" stroke-opacity=".55" stroke-width=".6" fill="none"/><rect width="16" height="11" fill="url(#sh)"/><rect x=".25" y=".25" width="15.5" height="10.5" fill="none" stroke="#000" stroke-opacity=".18" stroke-width=".5"/></svg>
<div class="t" style="left:383.5px;top:777.00px;font-size:13.9px;line-height:16px;"><a class="cs">EU8T</a></div>
<div class="t" style="right:732.0px;top:777.00px;font-size:13.9px;text-align:right;"><b>1473</b> km</div>
<div class="t" style="right:484.4px;top:777.00px;font-size:13.9px;text-align:right;">3554.1</div>
<div class="t" style="left:1080.5px;width:200px;text-align:center;top:777.00px;font-size:13.9px;">CW</div>
<div class="t" style="left:1213.2px;width:200px;text-align:center;top:777.00px;font-size:13.9px;">CQ</div>
<div class="t" style="right:38.7px;top:777.00px;font-size:13.9px;text-align:right;">32 dB</div>
<div class="hl" style="top:824px;background:#dddcd6"></div>
<svg class="abs" style="left:20.0px;top:803.50px" width="20" height="13.75" viewBox="0 0 16 11" preserveAspectRatio="none"><defs><linearGradient id="sh" x1="0" y1="0" x2="0" y2="1"><stop offset="0" stop-color="#fff" stop-opacity=".45"/><stop offset=".5" stop-color="#fff" stop-opacity=".05"/><stop offset="1" stop-color="#000" stop-opacity=".12"/></linearGradient></defs><rect width="16" height="11" fill="#fafafa"/><rect x="7" width="2" height="11" fill="#d42a33"/><rect y="4.5" width="16" height="2" fill="#d42a33"/><rect width="16" height="11" fill="url(#sh)"/><rect x=".25" y=".25" width="15.5" height="10.5" fill="none" stroke="#000" stroke-opacity=".18" stroke-width=".5"/></svg>
<div class="t" style="left:47.5px;top:804.00px;font-size:13.9px;line-height:16px;"><a class="cs">G3YPP</a></div>
<svg class="abs" style="left:356.0px;top:803.50px" width="20" height="13.75" viewBox="0 0 16 11" preserveAspectRatio="none"><defs><linearGradient id="sh" x1="0" y1="0" x2="0" y2="1"><stop offset="0" stop-color="#fff" stop-opacity=".45"/><stop offset=".5" stop-color="#fff" stop-opacity=".05"/><stop offset="1" stop-color="#000" stop-opacity=".12"/></linearGradient></defs><rect width="16" height="7.4" fill="#f0201e"/><rect y="7.4" width="16" height="3.6" fill="#1f9a2e"/><rect width="2.8" height="11" fill="#f9d2d0"/><path d="M1.3 0.3V11" stroke="#e03a36" stroke-width=".8" stroke-dasharray="1 1"/><path d="M2.8 10.7H15.7V0.4" stroke="#0a3a0a" stroke-opacity=".55" stroke-width=".6" fill="none"/><rect width="16" height="11" fill="url(#sh)"/><rect x=".25" y=".25" width="15.5" height="10.5" fill="none" stroke="#000" stroke-opacity=".18" stroke-width=".5"/></svg>
<div class="t" style="left:383.5px;top:804.00px;font-size:13.9px;line-height:16px;"><a class="cs">EU8T</a></div>
<div class="t" style="right:732.0px;top:804.00px;font-size:13.9px;text-align:right;"><b>1981</b> km</div>
<div class="t" style="right:484.4px;top:804.00px;font-size:13.9px;text-align:right;">3554.1</div>
<div class="t" style="left:1080.5px;width:200px;text-align:center;top:804.00px;font-size:13.9px;">CW</div>
<div class="t" style="left:1213.2px;width:200px;text-align:center;top:804.00px;font-size:13.9px;">CQ</div>
<div class="t" style="right:38.7px;top:804.00px;font-size:13.9px;text-align:right;">25 dB</div>
<div class="hl" style="top:850px;background:#dddcd6"></div>
<svg class="abs" style="left:20.0px;top:829.50px" width="20" height="13.75" viewBox="0 0 16 11" preserveAspectRatio="none"><defs><linearGradient id="sh" x1="0" y1="0" x2="0" y2="1"><stop offset="0" stop-color="#fff" stop-opacity=".45"/><stop offset=".5" stop-color="#fff" stop-opacity=".05"/><stop offset="1" stop-color="#000" stop-opacity=".12"/></linearGradient></defs><rect y="0.8" width="16" height="3.2" fill="#3a3a3a"/><rect y="4" width="16" height="3.4" fill="#e62a22"/><rect y="7.4" width="16" height="3.6" fill="#f7c92d"/><rect x=".3" y="1.1" width="15.4" height="9.6" fill="none" stroke="#4a3a1a" stroke-opacity=".55" stroke-width=".6"/><rect width="16" height="11" fill="url(#sh)"/><rect x=".25" y=".25" width="15.5" height="10.5" fill="none" stroke="#000" stroke-opacity=".18" stroke-width=".5"/></svg>
<div class="t" style="left:47.5px;top:830.00px;font-size:13.9px;line-height:16px;"><a class="cs">DL5RMH</a></div>
<svg class="abs" style="left:356.0px;top:829.50px" width="20" height="13.75" viewBox="0 0 16 11" preserveAspectRatio="none"><defs><linearGradient id="sh" x1="0" y1="0" x2="0" y2="1"><stop offset="0" stop-color="#fff" stop-opacity=".45"/><stop offset=".5" stop-color="#fff" stop-opacity=".05"/><stop offset="1" stop-color="#000" stop-opacity=".12"/></linearGradient></defs><rect width="16" height="7.4" fill="#f0201e"/><rect y="7.4" width="16" height="3.6" fill="#1f9a2e"/><rect width="2.8" height="11" fill="#f9d2d0"/><path d="M1.3 0.3V11" stroke="#e03a36" stroke-width=".8" stroke-dasharray="1 1"/><path d="M2.8 10.7H15.7V0.4" stroke="#0a3a0a" stroke-opacity=".55" stroke-width=".6" fill="none"/><rect width="16" height="11" fill="url(#sh)"/><rect x=".25" y=".25" width="15.5" height="10.5" fill="none" stroke="#000" stroke-opacity=".18" stroke-width=".5"/></svg>
<div class="t" style="left:383.5px;top:830.00px;font-size:13.9px;line-height:16px;"><a class="cs">EU8T</a></div>
<div class="t" style="right:732.0px;top:830.00px;font-size:13.9px;text-align:right;"><b>1401</b> km</div>
<div class="t" style="right:484.4px;top:830.00px;font-size:13.9px;text-align:right;">3554.1</div>
<div class="t" style="left:1080.5px;width:200px;text-align:center;top:830.00px;font-size:13.9px;">CW</div>
<div class="t" style="left:1213.2px;width:200px;text-align:center;top:830.00px;font-size:13.9px;">CQ</div>
<div class="t" style="right:38.7px;top:830.00px;font-size:13.9px;text-align:right;">26 dB</div>
<div class="hl" style="top:877px;background:#dddcd6"></div>
<svg class="abs" style="left:20.0px;top:855.50px" width="20" height="13.75" viewBox="0 0 16 11" preserveAspectRatio="none"><defs><linearGradient id="sh" x1="0" y1="0" x2="0" y2="1"><stop offset="0" stop-color="#fff" stop-opacity=".45"/><stop offset=".5" stop-color="#fff" stop-opacity=".05"/><stop offset="1" stop-color="#000" stop-opacity=".12"/></linearGradient></defs><rect width="16" height="5.5" fill="#2f8ff5"/><rect y="5.5" width="16" height="5.5" fill="#ffe52e"/><rect width="16" height="11" fill="url(#sh)"/><rect x=".25" y=".25" width="15.5" height="10.5" fill="none" stroke="#000" stroke-opacity=".18" stroke-width=".5"/></svg>
<div class="t" style="left:47.5px;top:856.00px;font-size:13.9px;line-height:16px;"><a class="cs">UY2RA</a></div>
<svg class="abs" style="left:356.0px;top:855.50px" width="20" height="13.75" viewBox="0 0 16 11" preserveAspectRatio="none"><defs><linearGradient id="sh" x1="0" y1="0" x2="0" y2="1"><stop offset="0" stop-color="#fff" stop-opacity=".45"/><stop offset=".5" stop-color="#fff" stop-opacity=".05"/><stop offset="1" stop-color="#000" stop-opacity=".12"/></linearGradient></defs><rect width="16" height="7.4" fill="#f0201e"/><rect y="7.4" width="16" height="3.6" fill="#1f9a2e"/><rect width="2.8" height="11" fill="#f9d2d0"/><path d="M1.3 0.3V11" stroke="#e03a36" stroke-width=".8" stroke-dasharray="1 1"/><path d="M2.8 10.7H15.7V0.4" stroke="#0a3a0a" stroke-opacity=".55" stroke-width=".6" fill="none"/><rect width="16" height="11" fill="url(#sh)"/><rect x=".25" y=".25" width="15.5" height="10.5" fill="none" stroke="#000" stroke-opacity=".18" stroke-width=".5"/></svg>
<div class="t" style="left:383.5px;top:856.00px;font-size:13.9px;line-height:16px;"><a class="cs">EU8T</a></div>
<div class="t" style="right:732.0px;top:856.00px;font-size:13.9px;text-align:right;"><b>104</b> km</div>
<div class="t" style="right:484.4px;top:856.00px;font-size:13.9px;text-align:right;">3554.1</div>
<div class="t" style="left:1080.5px;width:200px;text-align:center;top:856.00px;font-size:13.9px;">CW</div>
<div class="t" style="left:1213.2px;width:200px;text-align:center;top:856.00px;font-size:13.9px;">CQ</div>
<div class="t" style="right:38.7px;top:856.00px;font-size:13.9px;text-align:right;">8 dB</div>
<div class="t" style="left:12.6px;top:878.00px;font-size:13.9px;line-height:16px;">Version: v2.2.5</div>
</body></html>
